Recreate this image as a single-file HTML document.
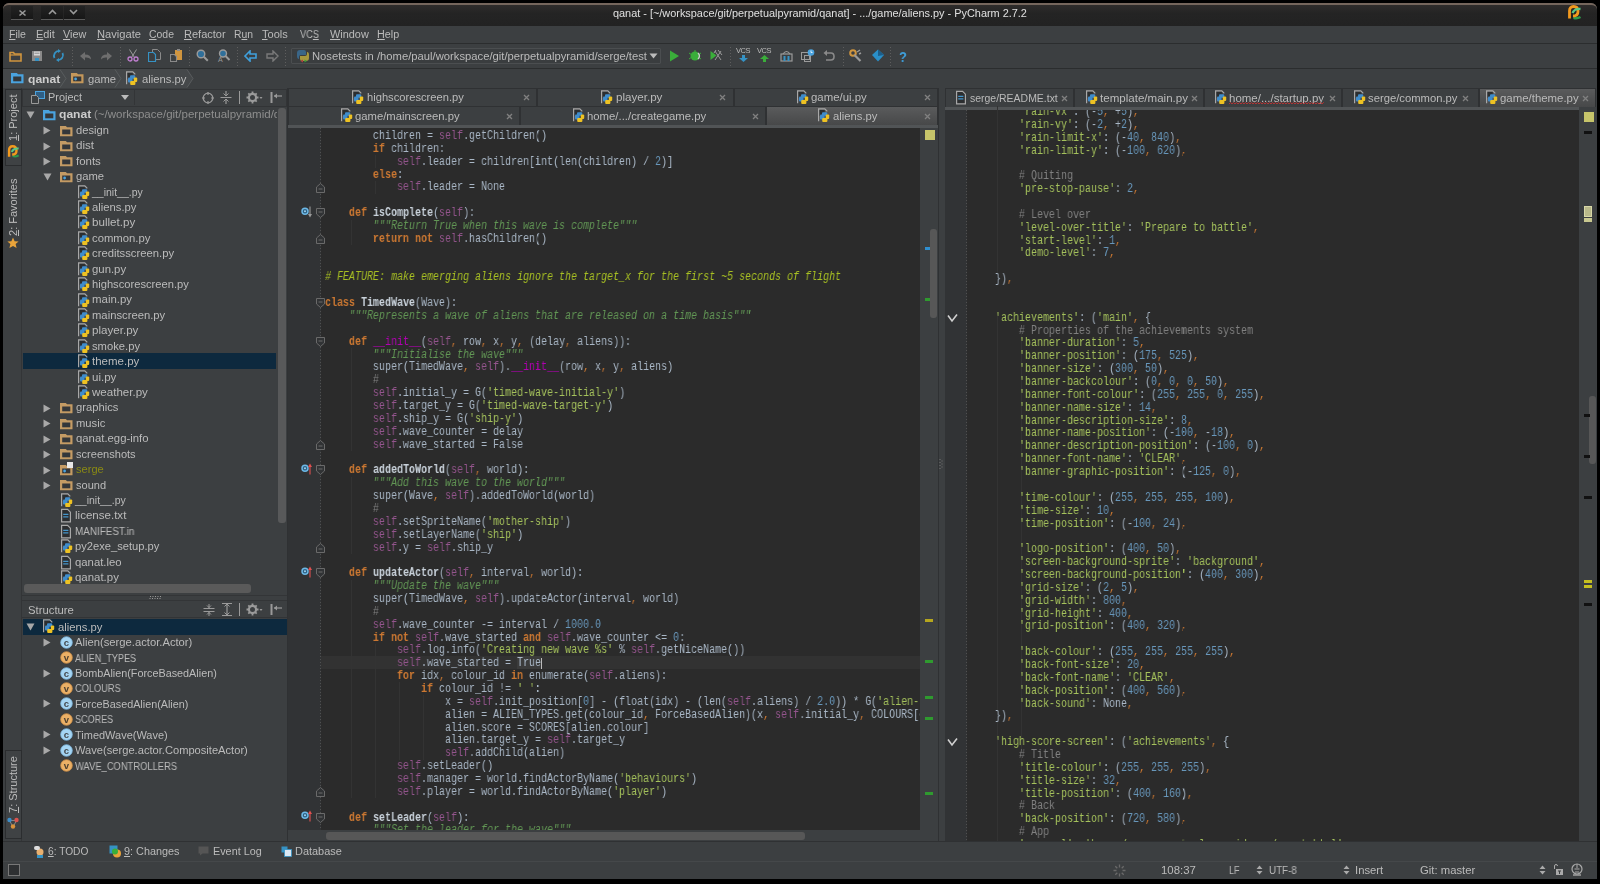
<!DOCTYPE html><html><head><meta charset="utf-8"><style>
*{margin:0;padding:0;box-sizing:border-box}
html,body{width:1600px;height:884px;overflow:hidden;background:#000}
body{position:relative;font-family:"Liberation Sans",sans-serif;font-size:10px;color:#bbbbbb}
.a{position:absolute}
.t{position:absolute;white-space:pre;line-height:14px;will-change:transform}
.win{position:absolute;left:3px;top:3px;width:1594px;height:876px;background:#3c3f41;border-radius:6px 6px 0 0;overflow:hidden}
.code{position:absolute;font-family:"Liberation Mono",monospace;font-size:12px;white-space:pre;line-height:12.857px;color:#a9b7c6;transform:scaleX(0.83333);transform-origin:0 0;will-change:transform}
.k{color:#cc7832;font-weight:bold}
.s{color:#94558d}
.st{color:#a5c25c}
.ds{color:#629755;font-style:italic}
.c{color:#808080}
.td{color:#a8c023;font-style:italic}
.n{color:#6897bb}
.cm{color:#cc7832}
.mg{color:#b200b2}
.fn{color:#c9d2db;font-weight:bold}
</style></head><body><div class="a" style="left:3px;top:3px;width:1594px;height:876px;background:#3c3f41;border-radius:6px 6px 0 0"></div>
<div class="a" style="left:3px;top:3px;width:1594px;height:22.5px;background:linear-gradient(#2e2c2b,#242424 40%,#222222);border-radius:6px 6px 0 0;border-top:2px solid #75665c"></div>
<div class="a" style="left:11px;top:6px;width:21.5px;height:14px;background:linear-gradient(#232323,#171717);border-bottom:1px solid #5a5a5a"></div>
<div class="a" style="left:41px;top:6px;width:21.5px;height:14px;background:linear-gradient(#232323,#171717);border-bottom:1px solid #5a5a5a"></div>
<div class="a" style="left:64px;top:6px;width:20.5px;height:14px;background:linear-gradient(#232323,#171717);border-bottom:1px solid #5a5a5a"></div>
<svg class="a" style="left:18px;top:9px" width="9" height="8" viewBox="0 0 9 8"><path d="M1.5 1.5l6 5M7.5 1.5l-6 5" stroke="#9a9a9a" stroke-width="1.6"/></svg>
<svg class="a" style="left:48px;top:9px" width="9" height="6" viewBox="0 0 9 6"><path d="M1 5l3.5-3.5l3.5 3.5" fill="none" stroke="#9a9a9a" stroke-width="1.6"/></svg>
<svg class="a" style="left:69px;top:9px" width="9" height="6" viewBox="0 0 9 6"><path d="M1 1l3.5 3.5l3.5-3.5" fill="none" stroke="#9a9a9a" stroke-width="1.6"/></svg>
<div class="t" style="left:613px;top:7.0px;color:#e0e0e0;transform:scaleX(1.0895);transform-origin:0 0">qanat - [~/workspace/git/perpetualpyramid/qanat] - .../game/aliens.py - PyCharm 2.7.2</div>
<svg class="a" style="left:1566px;top:5px" width="16" height="15" viewBox="0 0 16 15"><path d="M7.5 12.8q3.5 1.2 7-0.8" fill="none" stroke="#2f9a4c" stroke-width="2.4"/><path d="M3.5 13.5V6q0-4.5 4-4.5q4.5 0 4.5 5q0 4.5-5 4.5" fill="none" stroke="#f39a1e" stroke-width="2.8"/><path d="M6.5 8q2-4.5 8-4" fill="none" stroke="#5cc885" stroke-width="2.3"/></svg>
<div class="a" style="left:3px;top:25.5px;width:1594px;height:17.5px;background:#3c3f41"></div>
<div class="a" style="left:3px;top:43px;width:1594px;height:1px;background:#2b2d2e"></div>
<div class="t" style="left:9px;top:27.5px;color:#bbbbbb;transform:scaleX(1.0541);transform-origin:0 0"><u>F</u>ile</div>
<div class="t" style="left:36px;top:27.5px;color:#bbbbbb;transform:scaleX(1.0928);transform-origin:0 0"><u>E</u>dit</div>
<div class="t" style="left:63px;top:27.5px;color:#bbbbbb;transform:scaleX(1.0863);transform-origin:0 0"><u>V</u>iew</div>
<div class="t" style="left:97px;top:27.5px;color:#bbbbbb;transform:scaleX(1.1147);transform-origin:0 0"><u>N</u>avigate</div>
<div class="t" style="left:149px;top:27.5px;color:#bbbbbb;transform:scaleX(1.0445);transform-origin:0 0"><u>C</u>ode</div>
<div class="t" style="left:184px;top:27.5px;color:#bbbbbb;transform:scaleX(1.1001);transform-origin:0 0"><u>R</u>efactor</div>
<div class="t" style="left:234px;top:27.5px;color:#bbbbbb;transform:scaleX(1.0379);transform-origin:0 0">R<u>u</u>n</div>
<div class="t" style="left:262px;top:27.5px;color:#bbbbbb;transform:scaleX(1.1031);transform-origin:0 0"><u>T</u>ools</div>
<div class="t" style="left:300px;top:27.5px;color:#bbbbbb;transform:scaleX(0.9178);transform-origin:0 0">VC<u>S</u></div>
<div class="t" style="left:330px;top:27.5px;color:#bbbbbb;transform:scaleX(1.0888);transform-origin:0 0"><u>W</u>indow</div>
<div class="t" style="left:377px;top:27.5px;color:#bbbbbb;transform:scaleX(1.0775);transform-origin:0 0"><u>H</u>elp</div>
<div class="a" style="left:3px;top:44px;width:1594px;height:24px;background:#3c3f41"></div>
<div class="a" style="left:3px;top:68px;width:1594px;height:1px;background:#2b2d2e"></div>
<svg class="a" style="left:9px;top:50px" width="13" height="12" viewBox="0 0 13 12"><path d="M1 2.5h3.5l1 1.5h6.5v7h-11z" fill="none" stroke="#d0953e" stroke-width="1.6"/><path d="M1 5h11" stroke="#d0953e" stroke-width="1.2"/></svg>
<svg class="a" style="left:31px;top:50px" width="12" height="12" viewBox="0 0 12 12"><path d="M1 1h10v10h-10z" fill="#8a8a8a"/><rect x="3" y="1.5" width="6" height="4" fill="#d8d8d8"/><rect x="3.5" y="2.7" width="5" height="1" fill="#8a8a8a"/><rect x="4" y="8" width="4" height="3" fill="#3592c4"/></svg>
<svg class="a" style="left:52px;top:49px" width="13" height="13" viewBox="0 0 13 13"><path d="M2.5 9A5 5 0 0 1 7 1.8" fill="none" stroke="#3592c4" stroke-width="1.8"/><path d="M10.5 4A5 5 0 0 1 6 11.2" fill="none" stroke="#3592c4" stroke-width="1.8"/><path d="M6 0l3 2l-3 2z" fill="#3592c4"/><path d="M7 13l-3-2l3-2z" fill="#3592c4"/></svg>
<div class="a" style="left:72px;top:47px;width:1px;height:19px;background:repeating-linear-gradient(#5e5e5e 0 1px,transparent 1px 3px)"></div>
<div class="a" style="left:120px;top:47px;width:1px;height:19px;background:repeating-linear-gradient(#5e5e5e 0 1px,transparent 1px 3px)"></div>
<div class="a" style="left:189px;top:47px;width:1px;height:19px;background:repeating-linear-gradient(#5e5e5e 0 1px,transparent 1px 3px)"></div>
<div class="a" style="left:237px;top:47px;width:1px;height:19px;background:repeating-linear-gradient(#5e5e5e 0 1px,transparent 1px 3px)"></div>
<div class="a" style="left:285px;top:47px;width:1px;height:19px;background:repeating-linear-gradient(#5e5e5e 0 1px,transparent 1px 3px)"></div>
<div class="a" style="left:730px;top:47px;width:1px;height:19px;background:repeating-linear-gradient(#5e5e5e 0 1px,transparent 1px 3px)"></div>
<div class="a" style="left:843px;top:47px;width:1px;height:19px;background:repeating-linear-gradient(#5e5e5e 0 1px,transparent 1px 3px)"></div>
<div class="a" style="left:890px;top:47px;width:1px;height:19px;background:repeating-linear-gradient(#5e5e5e 0 1px,transparent 1px 3px)"></div>
<svg class="a" style="left:79px;top:51px" width="13" height="11" viewBox="0 0 13 11"><path d="M1 5l5-4v2.5q6 0 6 5q-2-2.5-6-2v3z" fill="#6e6e6e"/></svg>
<svg class="a" style="left:100px;top:51px" width="13" height="11" viewBox="0 0 13 11"><path d="M12 5l-5-4v2.5q-6 0-6 5q2-2.5 6-2v3z" fill="#6e6e6e"/></svg>
<svg class="a" style="left:127px;top:49px" width="12" height="13" viewBox="0 0 12 13"><path d="M2.5 0.5l5 8M9.5 0.5l-5 8" stroke="#9a9a9a" stroke-width="1"/><circle cx="3" cy="10" r="2" fill="none" stroke="#c07fd0" stroke-width="1.3"/><circle cx="9" cy="10" r="2" fill="none" stroke="#c07fd0" stroke-width="1.3"/></svg>
<svg class="a" style="left:148px;top:49px" width="13" height="13" viewBox="0 0 13 13"><path d="M4.5 0.5h5l3 3v7h-8z" fill="none" stroke="#8a8a8a"/><path d="M0.5 3.5h5l2 2v7h-7z" fill="#3c3f41" stroke="#3592c4" stroke-width="1.2"/></svg>
<svg class="a" style="left:170px;top:49px" width="13" height="13" viewBox="0 0 13 13"><rect x="5" y="1" width="7" height="10" fill="#d0953e"/><rect x="7" y="0" width="3" height="2" fill="#8a8a8a"/><path d="M0.5 5.5h4l2 2v5h-6z" fill="#3c3f41" stroke="#8a8a8a" stroke-width="1.1"/></svg>
<svg class="a" style="left:196px;top:49px" width="13" height="13" viewBox="0 0 13 13"><circle cx="5" cy="5" r="3.8" fill="#2f6f9a" stroke="#9a9a9a" stroke-width="1.4"/><path d="M7.8 7.8l4 4" stroke="#9a9a9a" stroke-width="2"/></svg>
<svg class="a" style="left:217px;top:49px" width="14" height="13" viewBox="0 0 14 13"><circle cx="6" cy="4.5" r="3.5" fill="#2f6f9a" stroke="#9a9a9a" stroke-width="1.4"/><path d="M8.5 7l4 4" stroke="#9a9a9a" stroke-width="2"/><text x="1" y="13" font-family="Liberation Sans" font-size="7" fill="#9a9a9a">A</text></svg>
<svg class="a" style="left:244px;top:50px" width="13" height="12" viewBox="0 0 13 12"><path d="M1 6l5-5v3h6v4h-6v3z" fill="none" stroke="#3fa0dc" stroke-width="1.6"/></svg>
<svg class="a" style="left:266px;top:50px" width="13" height="12" viewBox="0 0 13 12"><path d="M12 6l-5-5v3h-6v4h6v3z" fill="none" stroke="#7a7a7a" stroke-width="1.4"/></svg>
<div class="a" style="left:291px;top:48px;width:370px;height:16px;background:#3a3d3f;border:1px solid #4b4e50;border-radius:1px"></div>
<svg class="a" style="left:296px;top:49px" width="14" height="14" viewBox="0 0 14 14"><path d="M4 1h4q2 0 2 2v3h-5q-2 0-2 2v2q-2 0-2-3v-3q0-3 3-3z" fill="#3a6688"/><path d="M10 12h-4q-2 0-2-2v-3h5q2 0 2-2v-2q2 0 2 3v3q0 3-3 3z" fill="#a6983e"/><path d="M7 10.5l-2.5 1.5l2.5 1.5z" fill="#b04040"/><path d="M8.5 10.5l2.5 1.5l-2.5 1.5z" fill="#3a9a3a"/></svg>
<div class="t" style="left:312px;top:50.0px;color:#bbbbbb;transform:scaleX(1.1243);transform-origin:0 0">Nosetests in /home/paul/workspace/git/perpetualpyramid/serge/test</div>
<svg class="a" style="left:649px;top:53px" width="9" height="6" viewBox="0 0 9 6"><path d="M0.5 0.5h8l-4 5z" fill="#bbbbbb"/></svg>
<svg class="a" style="left:669px;top:50px" width="10" height="12" viewBox="0 0 10 12"><path d="M1 0.5l9 5.5l-9 5.5z" fill="#3aae3a"/></svg>
<svg class="a" style="left:689px;top:49px" width="13" height="13" viewBox="0 0 13 13"><circle cx="6" cy="7" r="4.5" fill="#3aae3a"/><path d="M0 4l3 2M0 10l3-2M12 4l-3 2M12 10l-3-2M6 1v3" stroke="#3aae3a" stroke-width="1"/><path d="M9 4q3 3 0 6" stroke="#cccccc" stroke-width="1.3" fill="none"/></svg>
<svg class="a" style="left:710px;top:49px" width="13" height="13" viewBox="0 0 13 13"><path d="M0.5 2l6 4.5l-6 4.5z" fill="#3aae3a"/><path d="M5 2l6 9M8 1l4 5M11 2l-6 9M6 1l-2 3" stroke="#9a9a9a" stroke-width="1" fill="none"/></svg>
<div class="t" style="left:736px;top:46px;font-size:7.5px;line-height:9px;color:#bbbbbb;letter-spacing:-0.5px">VCS</div>
<svg class="a" style="left:739px;top:55px" width="9" height="7" viewBox="0 0 9 7"><path d="M4.5 7l4.5-4h-3v-3h-3v3h-3z" fill="#3592c4"/></svg>
<div class="t" style="left:757px;top:46px;font-size:7.5px;line-height:9px;color:#bbbbbb;letter-spacing:-0.5px">VCS</div>
<svg class="a" style="left:760px;top:55px" width="9" height="7" viewBox="0 0 9 7"><path d="M4.5 0l4.5 4h-3v3h-3v-3h-3z" fill="#3aae3a"/></svg>
<svg class="a" style="left:780px;top:49px" width="13" height="13" viewBox="0 0 13 13"><rect x="1" y="5" width="11" height="7" fill="none" stroke="#9a9a9a" stroke-width="1.2"/><rect x="3.5" y="7" width="2" height="5" fill="#3592c4"/><rect x="7.5" y="7" width="2" height="5" fill="#3592c4"/><path d="M3 5q3.5-5 7 0" fill="none" stroke="#9a9a9a" stroke-width="1.2"/></svg>
<svg class="a" style="left:801px;top:49px" width="14" height="13" viewBox="0 0 14 13"><rect x="0.5" y="3.5" width="8" height="7" fill="none" stroke="#9a9a9a"/><rect x="3.5" y="6.5" width="6" height="6" fill="none" stroke="#9a9a9a"/><circle cx="10" cy="3.5" r="3.3" fill="#4aa3df"/><path d="M10 1.5v2h1.5" stroke="#fff" stroke-width="0.8" fill="none"/></svg>
<svg class="a" style="left:823px;top:50px" width="12" height="12" viewBox="0 0 12 12"><path d="M3 3h5q3 0 3 3.5t-3 3.5h-5" fill="none" stroke="#8a8a8a" stroke-width="1.6"/><path d="M0.5 3l3.5-3v6z" fill="#8a8a8a"/></svg>
<svg class="a" style="left:849px;top:49px" width="13" height="13" viewBox="0 0 13 13"><circle cx="4" cy="4" r="2.8" fill="none" stroke="#d0953e" stroke-width="2"/><path d="M5.5 6l6 6" stroke="#9a9a9a" stroke-width="2.2"/><path d="M8 3l3-2M10 5l2-1" stroke="#9a9a9a" stroke-width="1.4"/></svg>
<svg class="a" style="left:871px;top:49px" width="14" height="13" viewBox="0 0 14 13"><path d="M7 0.5l6 5.5l-6 6.5l-6-6.5z" fill="#2a8fc8"/><path d="M7 0.5l6 5.5l-6 1z" fill="#1c5e8a"/></svg>
<div class="t" style="left:899px;top:48.0px;font-size:15px;line-height:17px;color:#3fa0dc;font-weight:bold;transform:scaleX(0.8538);transform-origin:0 0">?</div>
<div class="a" style="left:3px;top:69px;width:1594px;height:19px;background:#3c3f41"></div>
<svg class="a" style="left:3px;top:69px" width="192" height="19" viewBox="0 0 192 19"><path d="M0 0H184L190 9.5L184 19H0z" fill="#45484a"/><path d="M57 0.5L63 9.5L57 18.5M112 0.5L118 9.5L112 18.5M184 0.5L190 9.5L184 18.5" fill="none" stroke="#595c5e" stroke-width="1"/></svg>
<svg class="a" style="left:11px;top:72px" width="13" height="12" viewBox="0 0 13 12"><path d="M0 1h5.8l1.3 1.2h5.4v9h-12.5z" fill="#4aa3df"/><rect x="2.2" y="4.5" width="8.1" height="4.8" fill="#34373a"/></svg>
<div class="t" style="left:28px;top:73.0px;color:#cccccc;font-weight:bold;transform:scaleX(1.2084);transform-origin:0 0">qanat</div>
<svg class="a" style="left:71px;top:72px" width="13" height="12" viewBox="0 0 13 12"><path d="M0 1h5.8l1.3 1.2h5.4v9h-12.5z" fill="#c3975b"/><rect x="2.2" y="4.5" width="8.1" height="4.8" fill="#34373a"/><circle cx="4.6" cy="7" r="1.4" fill="#4aa3df"/></svg>
<div class="t" style="left:88px;top:73.0px;color:#bbbbbb;transform:scaleX(1.1226);transform-origin:0 0">game</div>
<svg class="a" style="left:126px;top:71px" width="12" height="15" viewBox="0 0 12 15"><rect x="1.2" y="1.8" width="5.5" height="6" fill="#2c2e30"/><path d="M0.6 13.2V0.9H6.8L9.3 3.4" fill="none" stroke="#a8a8a8" stroke-width="1.2"/><rect x="4" y="4.3" width="5.2" height="3.4" rx="1" fill="#3f8ccb"/><rect x="2" y="6.5" width="4.5" height="5" rx="1" fill="#3f8ccb"/><rect x="7.8" y="6.5" width="3.4" height="4.5" rx="1" fill="#eec223"/><rect x="4.2" y="10" width="5.2" height="4" rx="1" fill="#eec223"/></svg>
<div class="t" style="left:142px;top:73.0px;color:#bbbbbb;transform:scaleX(1.1248);transform-origin:0 0">aliens.py</div>
<div class="a" style="left:3px;top:88px;width:19px;height:753px;background:#3c3f41;border-right:1px solid #333537"></div>
<div class="a" style="left:5px;top:88.5px;width:16.5px;height:77px;background:#3f4244;border:1px solid #2b2d2f"></div>
<div class="t" style="left:13px;top:141px;transform-origin:0 0;transform:rotate(-90deg) translate(0,-7px);color:#bbbbbb;font-size:11px"><u>1</u>: Project</div>
<svg class="a" style="left:6px;top:145px" width="14" height="13" viewBox="0 0 16 15"><path d="M7.5 12.8q3.5 1.2 7-0.8" fill="none" stroke="#2f9a4c" stroke-width="2.4"/><path d="M3.5 13.5V6q0-4.5 4-4.5q4.5 0 4.5 5q0 4.5-5 4.5" fill="none" stroke="#f39a1e" stroke-width="2.8"/><path d="M6.5 8q2-4.5 8-4" fill="none" stroke="#5cc885" stroke-width="2.3"/></svg>
<div class="t" style="left:13px;top:236px;transform-origin:0 0;transform:rotate(-90deg) translate(0,-7px);color:#bbbbbb;font-size:11px"><u>2</u>: Favorites</div>
<svg class="a" style="left:7px;top:237px" width="12" height="12" viewBox="0 0 12 12"><path d="M6 0.5l1.6 3.7l4 .3l-3 2.6l1 3.9l-3.6-2.1l-3.6 2.1l1-3.9l-3-2.6l4-.3z" fill="#e8a33a"/></svg>
<div class="a" style="left:5px;top:749.5px;width:16.5px;height:89px;background:#3f4244;border:1px solid #2b2d2f"></div>
<div class="t" style="left:13px;top:813px;transform-origin:0 0;transform:rotate(-90deg) translate(0,-7px);color:#bbbbbb;font-size:11px"><u>7</u>: Structure</div>
<svg class="a" style="left:7px;top:816.5px" width="12" height="12" viewBox="0 0 12 12"><path d="M2.5 3.5l3.5 6.5l3.5-6.5z" fill="none" stroke="#999" stroke-width="0.8"/><circle cx="2.5" cy="3" r="2.2" fill="#3d8ec9"/><circle cx="9.5" cy="3" r="2.2" fill="#d9534f"/><circle cx="6" cy="9.5" r="2.2" fill="#d9923a"/></svg>
<div class="a" style="left:22px;top:88px;width:265px;height:753px;background:#3c3f41"></div>
<div class="a" style="left:22px;top:89px;width:265px;height:18px;background:#3c3f41;border:1px solid #323436"></div>
<svg class="a" style="left:31px;top:91px" width="14" height="13" viewBox="0 0 14 13"><rect x="4.5" y="0.5" width="9" height="7" fill="#2f5f85" stroke="#4aa3df"/><path d="M0.5 4.5h5l2 2v6h-7z" fill="#3c3f41" stroke="#9a9a9a"/></svg>
<div class="t" style="left:48px;top:91.0px;color:#bbbbbb;transform:scaleX(1.0904);transform-origin:0 0">Project</div>
<svg class="a" style="left:121px;top:95px" width="8" height="5" viewBox="0 0 8 5"><path d="M0 0h8l-4 5z" fill="#bbbbbb"/></svg>
<div class="a" style="left:134px;top:90px;width:1px;height:15px;background:#333537"></div>
<svg class="a" style="left:202px;top:92px" width="12" height="12" viewBox="0 0 12 12"><circle cx="6" cy="6" r="4.8" fill="none" stroke="#9a9a9a" stroke-width="1.3"/><path d="M6 0v3M6 9v3M0 6h3M9 6h3" stroke="#9a9a9a" stroke-width="1.2"/></svg>
<svg class="a" style="left:220px;top:91px" width="12" height="13" viewBox="0 0 12 13"><path d="M6 0v4.5M6 8.5v4.5M0.5 6.5h11" stroke="#9a9a9a" stroke-width="1.2"/><path d="M3.5 2.5l2.5 2.5l2.5-2.5M3.5 10.5l2.5-2.5l2.5 2.5" fill="none" stroke="#9a9a9a"/></svg>
<div class="a" style="left:239px;top:91px;width:1px;height:13px;background:#9a9a9a"></div>
<svg class="a" style="left:246px;top:91px" width="17" height="13" viewBox="0 0 17 13"><circle cx="6.5" cy="6.5" r="3.6" fill="none" stroke="#9a9a9a" stroke-width="2.2"/><path d="M6.5 0.5v2.5M6.5 10v2.5M0.5 6.5h2.5M10 6.5h2.5M2.3 2.3l1.8 1.8M8.9 8.9l1.8 1.8M10.7 2.3l-1.8 1.8M4.1 8.9l-1.8 1.8" stroke="#9a9a9a" stroke-width="1.8"/><path d="M13.5 6h3l-1.5 2z" fill="#9a9a9a"/></svg>
<svg class="a" style="left:270px;top:91px" width="12" height="13" viewBox="0 0 12 13"><rect x="0.5" y="1" width="2" height="11" fill="#9a9a9a"/><path d="M4 5h8" stroke="#9a9a9a" stroke-width="1.2"/><path d="M4 5l3-2.5v5z" fill="#9a9a9a"/></svg>
<svg class="a" style="left:25.5px;top:111.2px" width="9" height="8" viewBox="0 0 9 8"><path d="M0.5 0.5h8l-4 7z" fill="#a8a8a8"/></svg>
<svg class="a" style="left:43px;top:109.2px" width="13" height="12" viewBox="0 0 13 12"><path d="M0 1h5.8l1.3 1.2h5.4v9h-12.5z" fill="#4aa3df"/><rect x="2.2" y="4.5" width="8.1" height="4.8" fill="#34373a"/></svg>
<div class="t" style="left:59px;top:108.45px;color:#cccccc;font-weight:bold;transform:scaleX(1.2084);transform-origin:0 0">qanat</div>
<div class="a" style="left:94px;top:106px;width:183px;height:17px;overflow:hidden">
<div class="t" style="left:0px;top:2.45px;color:#8e8e8e;transform:scaleX(1.1537);transform-origin:0 0">(~/workspace/git/perpetualpyramid/qanat)</div>
</div>
<svg class="a" style="left:42.8px;top:126.32px" width="8" height="9" viewBox="0 0 8 9"><path d="M0.5 0.5l7 4l-7 4z" fill="#a8a8a8"/></svg>
<svg class="a" style="left:60px;top:124.62px" width="13" height="12" viewBox="0 0 13 12"><path d="M0 1h5.8l1.3 1.2h5.4v9h-12.5z" fill="#c49b64"/><rect x="2.2" y="4.5" width="8.1" height="4.8" fill="#34373a"/></svg>
<div class="t" style="left:76px;top:123.87px;color:#bbbbbb;transform:scaleX(1.1147);transform-origin:0 0">design</div>
<svg class="a" style="left:42.8px;top:141.74px" width="8" height="9" viewBox="0 0 8 9"><path d="M0.5 0.5l7 4l-7 4z" fill="#a8a8a8"/></svg>
<svg class="a" style="left:60px;top:140.04px" width="13" height="12" viewBox="0 0 13 12"><path d="M0 1h5.8l1.3 1.2h5.4v9h-12.5z" fill="#c49b64"/><rect x="2.2" y="4.5" width="8.1" height="4.8" fill="#34373a"/></svg>
<div class="t" style="left:76px;top:139.29px;color:#bbbbbb;transform:scaleX(1.1620);transform-origin:0 0">dist</div>
<svg class="a" style="left:42.8px;top:157.16px" width="8" height="9" viewBox="0 0 8 9"><path d="M0.5 0.5l7 4l-7 4z" fill="#a8a8a8"/></svg>
<svg class="a" style="left:60px;top:155.46px" width="13" height="12" viewBox="0 0 13 12"><path d="M0 1h5.8l1.3 1.2h5.4v9h-12.5z" fill="#c49b64"/><rect x="2.2" y="4.5" width="8.1" height="4.8" fill="#34373a"/></svg>
<div class="t" style="left:76px;top:154.71px;color:#bbbbbb;transform:scaleX(1.1464);transform-origin:0 0">fonts</div>
<svg class="a" style="left:42.5px;top:172.88px" width="9" height="8" viewBox="0 0 9 8"><path d="M0.5 0.5h8l-4 7z" fill="#a8a8a8"/></svg>
<svg class="a" style="left:60px;top:170.88px" width="13" height="12" viewBox="0 0 13 12"><path d="M0 1h5.8l1.3 1.2h5.4v9h-12.5z" fill="#c49b64"/><rect x="2.2" y="4.5" width="8.1" height="4.8" fill="#34373a"/><circle cx="4.6" cy="7" r="1.4" fill="#4aa3df"/></svg>
<div class="t" style="left:76px;top:170.13px;color:#bbbbbb;transform:scaleX(1.1226);transform-origin:0 0">game</div>
<svg class="a" style="left:78px;top:184.6px" width="12" height="15" viewBox="0 0 12 15"><rect x="1.2" y="1.8" width="5.5" height="6" fill="#2c2e30"/><path d="M0.6 13.2V0.9H6.8L9.3 3.4" fill="none" stroke="#a8a8a8" stroke-width="1.2"/><rect x="4" y="4.3" width="5.2" height="3.4" rx="1" fill="#3f8ccb"/><rect x="2" y="6.5" width="4.5" height="5" rx="1" fill="#3f8ccb"/><rect x="7.8" y="6.5" width="3.4" height="4.5" rx="1" fill="#eec223"/><rect x="4.2" y="10" width="5.2" height="4" rx="1" fill="#eec223"/></svg>
<div class="t" style="left:92px;top:185.55px;color:#bbbbbb;transform:scaleX(1.0494);transform-origin:0 0">__init__.py</div>
<svg class="a" style="left:78px;top:200.02px" width="12" height="15" viewBox="0 0 12 15"><rect x="1.2" y="1.8" width="5.5" height="6" fill="#2c2e30"/><path d="M0.6 13.2V0.9H6.8L9.3 3.4" fill="none" stroke="#a8a8a8" stroke-width="1.2"/><rect x="4" y="4.3" width="5.2" height="3.4" rx="1" fill="#3f8ccb"/><rect x="2" y="6.5" width="4.5" height="5" rx="1" fill="#3f8ccb"/><rect x="7.8" y="6.5" width="3.4" height="4.5" rx="1" fill="#eec223"/><rect x="4.2" y="10" width="5.2" height="4" rx="1" fill="#eec223"/></svg>
<div class="t" style="left:92px;top:200.97px;color:#bbbbbb;transform:scaleX(1.1248);transform-origin:0 0">aliens.py</div>
<svg class="a" style="left:78px;top:215.44px" width="12" height="15" viewBox="0 0 12 15"><rect x="1.2" y="1.8" width="5.5" height="6" fill="#2c2e30"/><path d="M0.6 13.2V0.9H6.8L9.3 3.4" fill="none" stroke="#a8a8a8" stroke-width="1.2"/><rect x="4" y="4.3" width="5.2" height="3.4" rx="1" fill="#3f8ccb"/><rect x="2" y="6.5" width="4.5" height="5" rx="1" fill="#3f8ccb"/><rect x="7.8" y="6.5" width="3.4" height="4.5" rx="1" fill="#eec223"/><rect x="4.2" y="10" width="5.2" height="4" rx="1" fill="#eec223"/></svg>
<div class="t" style="left:92px;top:216.39px;color:#bbbbbb;transform:scaleX(1.1635);transform-origin:0 0">bullet.py</div>
<svg class="a" style="left:78px;top:230.86px" width="12" height="15" viewBox="0 0 12 15"><rect x="1.2" y="1.8" width="5.5" height="6" fill="#2c2e30"/><path d="M0.6 13.2V0.9H6.8L9.3 3.4" fill="none" stroke="#a8a8a8" stroke-width="1.2"/><rect x="4" y="4.3" width="5.2" height="3.4" rx="1" fill="#3f8ccb"/><rect x="2" y="6.5" width="4.5" height="5" rx="1" fill="#3f8ccb"/><rect x="7.8" y="6.5" width="3.4" height="4.5" rx="1" fill="#eec223"/><rect x="4.2" y="10" width="5.2" height="4" rx="1" fill="#eec223"/></svg>
<div class="t" style="left:92px;top:231.81px;color:#bbbbbb;transform:scaleX(1.1304);transform-origin:0 0">common.py</div>
<svg class="a" style="left:78px;top:246.28px" width="12" height="15" viewBox="0 0 12 15"><rect x="1.2" y="1.8" width="5.5" height="6" fill="#2c2e30"/><path d="M0.6 13.2V0.9H6.8L9.3 3.4" fill="none" stroke="#a8a8a8" stroke-width="1.2"/><rect x="4" y="4.3" width="5.2" height="3.4" rx="1" fill="#3f8ccb"/><rect x="2" y="6.5" width="4.5" height="5" rx="1" fill="#3f8ccb"/><rect x="7.8" y="6.5" width="3.4" height="4.5" rx="1" fill="#eec223"/><rect x="4.2" y="10" width="5.2" height="4" rx="1" fill="#eec223"/></svg>
<div class="t" style="left:92px;top:247.23px;color:#bbbbbb;transform:scaleX(1.1275);transform-origin:0 0">creditsscreen.py</div>
<svg class="a" style="left:78px;top:261.7px" width="12" height="15" viewBox="0 0 12 15"><rect x="1.2" y="1.8" width="5.5" height="6" fill="#2c2e30"/><path d="M0.6 13.2V0.9H6.8L9.3 3.4" fill="none" stroke="#a8a8a8" stroke-width="1.2"/><rect x="4" y="4.3" width="5.2" height="3.4" rx="1" fill="#3f8ccb"/><rect x="2" y="6.5" width="4.5" height="5" rx="1" fill="#3f8ccb"/><rect x="7.8" y="6.5" width="3.4" height="4.5" rx="1" fill="#eec223"/><rect x="4.2" y="10" width="5.2" height="4" rx="1" fill="#eec223"/></svg>
<div class="t" style="left:92px;top:262.65px;color:#bbbbbb;transform:scaleX(1.1365);transform-origin:0 0">gun.py</div>
<svg class="a" style="left:78px;top:277.12px" width="12" height="15" viewBox="0 0 12 15"><rect x="1.2" y="1.8" width="5.5" height="6" fill="#2c2e30"/><path d="M0.6 13.2V0.9H6.8L9.3 3.4" fill="none" stroke="#a8a8a8" stroke-width="1.2"/><rect x="4" y="4.3" width="5.2" height="3.4" rx="1" fill="#3f8ccb"/><rect x="2" y="6.5" width="4.5" height="5" rx="1" fill="#3f8ccb"/><rect x="7.8" y="6.5" width="3.4" height="4.5" rx="1" fill="#eec223"/><rect x="4.2" y="10" width="5.2" height="4" rx="1" fill="#eec223"/></svg>
<div class="t" style="left:92px;top:278.07px;color:#bbbbbb;transform:scaleX(1.1165);transform-origin:0 0">highscorescreen.py</div>
<svg class="a" style="left:78px;top:292.54px" width="12" height="15" viewBox="0 0 12 15"><rect x="1.2" y="1.8" width="5.5" height="6" fill="#2c2e30"/><path d="M0.6 13.2V0.9H6.8L9.3 3.4" fill="none" stroke="#a8a8a8" stroke-width="1.2"/><rect x="4" y="4.3" width="5.2" height="3.4" rx="1" fill="#3f8ccb"/><rect x="2" y="6.5" width="4.5" height="5" rx="1" fill="#3f8ccb"/><rect x="7.8" y="6.5" width="3.4" height="4.5" rx="1" fill="#eec223"/><rect x="4.2" y="10" width="5.2" height="4" rx="1" fill="#eec223"/></svg>
<div class="t" style="left:92px;top:293.49px;color:#bbbbbb;transform:scaleX(1.1434);transform-origin:0 0">main.py</div>
<svg class="a" style="left:78px;top:307.96px" width="12" height="15" viewBox="0 0 12 15"><rect x="1.2" y="1.8" width="5.5" height="6" fill="#2c2e30"/><path d="M0.6 13.2V0.9H6.8L9.3 3.4" fill="none" stroke="#a8a8a8" stroke-width="1.2"/><rect x="4" y="4.3" width="5.2" height="3.4" rx="1" fill="#3f8ccb"/><rect x="2" y="6.5" width="4.5" height="5" rx="1" fill="#3f8ccb"/><rect x="7.8" y="6.5" width="3.4" height="4.5" rx="1" fill="#eec223"/><rect x="4.2" y="10" width="5.2" height="4" rx="1" fill="#eec223"/></svg>
<div class="t" style="left:92px;top:308.91px;color:#bbbbbb;transform:scaleX(1.1249);transform-origin:0 0">mainscreen.py</div>
<svg class="a" style="left:78px;top:323.38px" width="12" height="15" viewBox="0 0 12 15"><rect x="1.2" y="1.8" width="5.5" height="6" fill="#2c2e30"/><path d="M0.6 13.2V0.9H6.8L9.3 3.4" fill="none" stroke="#a8a8a8" stroke-width="1.2"/><rect x="4" y="4.3" width="5.2" height="3.4" rx="1" fill="#3f8ccb"/><rect x="2" y="6.5" width="4.5" height="5" rx="1" fill="#3f8ccb"/><rect x="7.8" y="6.5" width="3.4" height="4.5" rx="1" fill="#eec223"/><rect x="4.2" y="10" width="5.2" height="4" rx="1" fill="#eec223"/></svg>
<div class="t" style="left:92px;top:324.33px;color:#bbbbbb;transform:scaleX(1.1598);transform-origin:0 0">player.py</div>
<svg class="a" style="left:78px;top:338.8px" width="12" height="15" viewBox="0 0 12 15"><rect x="1.2" y="1.8" width="5.5" height="6" fill="#2c2e30"/><path d="M0.6 13.2V0.9H6.8L9.3 3.4" fill="none" stroke="#a8a8a8" stroke-width="1.2"/><rect x="4" y="4.3" width="5.2" height="3.4" rx="1" fill="#3f8ccb"/><rect x="2" y="6.5" width="4.5" height="5" rx="1" fill="#3f8ccb"/><rect x="7.8" y="6.5" width="3.4" height="4.5" rx="1" fill="#eec223"/><rect x="4.2" y="10" width="5.2" height="4" rx="1" fill="#eec223"/></svg>
<div class="t" style="left:92px;top:339.75px;color:#bbbbbb;transform:scaleX(1.1215);transform-origin:0 0">smoke.py</div>
<div class="a" style="left:23px;top:353.21px;width:253px;height:16px;background:#0d293e"></div>
<svg class="a" style="left:78px;top:354.22px" width="12" height="15" viewBox="0 0 12 15"><rect x="1.2" y="1.8" width="5.5" height="6" fill="#2c2e30"/><path d="M0.6 13.2V0.9H6.8L9.3 3.4" fill="none" stroke="#a8a8a8" stroke-width="1.2"/><rect x="4" y="4.3" width="5.2" height="3.4" rx="1" fill="#3f8ccb"/><rect x="2" y="6.5" width="4.5" height="5" rx="1" fill="#3f8ccb"/><rect x="7.8" y="6.5" width="3.4" height="4.5" rx="1" fill="#eec223"/><rect x="4.2" y="10" width="5.2" height="4" rx="1" fill="#eec223"/></svg>
<div class="t" style="left:92px;top:355.17px;color:#bbbbbb;transform:scaleX(1.1492);transform-origin:0 0">theme.py</div>
<svg class="a" style="left:78px;top:369.64px" width="12" height="15" viewBox="0 0 12 15"><rect x="1.2" y="1.8" width="5.5" height="6" fill="#2c2e30"/><path d="M0.6 13.2V0.9H6.8L9.3 3.4" fill="none" stroke="#a8a8a8" stroke-width="1.2"/><rect x="4" y="4.3" width="5.2" height="3.4" rx="1" fill="#3f8ccb"/><rect x="2" y="6.5" width="4.5" height="5" rx="1" fill="#3f8ccb"/><rect x="7.8" y="6.5" width="3.4" height="4.5" rx="1" fill="#eec223"/><rect x="4.2" y="10" width="5.2" height="4" rx="1" fill="#eec223"/></svg>
<div class="t" style="left:92px;top:370.59px;color:#bbbbbb;transform:scaleX(1.1516);transform-origin:0 0">ui.py</div>
<svg class="a" style="left:78px;top:385.06px" width="12" height="15" viewBox="0 0 12 15"><rect x="1.2" y="1.8" width="5.5" height="6" fill="#2c2e30"/><path d="M0.6 13.2V0.9H6.8L9.3 3.4" fill="none" stroke="#a8a8a8" stroke-width="1.2"/><rect x="4" y="4.3" width="5.2" height="3.4" rx="1" fill="#3f8ccb"/><rect x="2" y="6.5" width="4.5" height="5" rx="1" fill="#3f8ccb"/><rect x="7.8" y="6.5" width="3.4" height="4.5" rx="1" fill="#eec223"/><rect x="4.2" y="10" width="5.2" height="4" rx="1" fill="#eec223"/></svg>
<div class="t" style="left:92px;top:386.01px;color:#bbbbbb;transform:scaleX(1.1548);transform-origin:0 0">weather.py</div>
<svg class="a" style="left:42.8px;top:403.88px" width="8" height="9" viewBox="0 0 8 9"><path d="M0.5 0.5l7 4l-7 4z" fill="#a8a8a8"/></svg>
<svg class="a" style="left:60px;top:402.18px" width="13" height="12" viewBox="0 0 13 12"><path d="M0 1h5.8l1.3 1.2h5.4v9h-12.5z" fill="#c49b64"/><rect x="2.2" y="4.5" width="8.1" height="4.8" fill="#34373a"/></svg>
<div class="t" style="left:76px;top:401.43px;color:#bbbbbb;transform:scaleX(1.1199);transform-origin:0 0">graphics</div>
<svg class="a" style="left:42.8px;top:419.3px" width="8" height="9" viewBox="0 0 8 9"><path d="M0.5 0.5l7 4l-7 4z" fill="#a8a8a8"/></svg>
<svg class="a" style="left:60px;top:417.6px" width="13" height="12" viewBox="0 0 13 12"><path d="M0 1h5.8l1.3 1.2h5.4v9h-12.5z" fill="#c49b64"/><rect x="2.2" y="4.5" width="8.1" height="4.8" fill="#34373a"/></svg>
<div class="t" style="left:76px;top:416.85px;color:#bbbbbb;transform:scaleX(1.1214);transform-origin:0 0">music</div>
<svg class="a" style="left:42.8px;top:434.72px" width="8" height="9" viewBox="0 0 8 9"><path d="M0.5 0.5l7 4l-7 4z" fill="#a8a8a8"/></svg>
<svg class="a" style="left:60px;top:433.02px" width="13" height="12" viewBox="0 0 13 12"><path d="M0 1h5.8l1.3 1.2h5.4v9h-12.5z" fill="#c49b64"/><rect x="2.2" y="4.5" width="8.1" height="4.8" fill="#34373a"/></svg>
<div class="t" style="left:76px;top:432.27px;color:#bbbbbb;transform:scaleX(1.1340);transform-origin:0 0">qanat.egg-info</div>
<svg class="a" style="left:42.8px;top:450.14px" width="8" height="9" viewBox="0 0 8 9"><path d="M0.5 0.5l7 4l-7 4z" fill="#a8a8a8"/></svg>
<svg class="a" style="left:60px;top:448.44px" width="13" height="12" viewBox="0 0 13 12"><path d="M0 1h5.8l1.3 1.2h5.4v9h-12.5z" fill="#c49b64"/><rect x="2.2" y="4.5" width="8.1" height="4.8" fill="#34373a"/></svg>
<div class="t" style="left:76px;top:447.69px;color:#bbbbbb;transform:scaleX(1.1063);transform-origin:0 0">screenshots</div>
<svg class="a" style="left:42.8px;top:465.56px" width="8" height="9" viewBox="0 0 8 9"><path d="M0.5 0.5l7 4l-7 4z" fill="#a8a8a8"/></svg>
<svg class="a" style="left:60px;top:463.86px" width="13" height="12" viewBox="0 0 13 12"><path d="M0 1h5.8l1.3 1.2h5.4v9h-12.5z" fill="#c49b64"/><rect x="2.2" y="4.5" width="8.1" height="4.8" fill="#34373a"/><circle cx="4.6" cy="7" r="1.4" fill="#4aa3df"/></svg>
<div class="a" style="left:67px;top:462.36px;width:6px;height:6px;background:#e8e8e8"></div>
<div class="t" style="left:76px;top:463.11px;color:#8a8a14;transform:scaleX(1.1069);transform-origin:0 0">serge</div>
<svg class="a" style="left:42.8px;top:480.98px" width="8" height="9" viewBox="0 0 8 9"><path d="M0.5 0.5l7 4l-7 4z" fill="#a8a8a8"/></svg>
<svg class="a" style="left:60px;top:479.28px" width="13" height="12" viewBox="0 0 13 12"><path d="M0 1h5.8l1.3 1.2h5.4v9h-12.5z" fill="#c49b64"/><rect x="2.2" y="4.5" width="8.1" height="4.8" fill="#34373a"/></svg>
<div class="t" style="left:76px;top:478.53px;color:#bbbbbb;transform:scaleX(1.1028);transform-origin:0 0">sound</div>
<svg class="a" style="left:61px;top:493.0px" width="12" height="15" viewBox="0 0 12 15"><rect x="1.2" y="1.8" width="5.5" height="6" fill="#2c2e30"/><path d="M0.6 13.2V0.9H6.8L9.3 3.4" fill="none" stroke="#a8a8a8" stroke-width="1.2"/><rect x="4" y="4.3" width="5.2" height="3.4" rx="1" fill="#3f8ccb"/><rect x="2" y="6.5" width="4.5" height="5" rx="1" fill="#3f8ccb"/><rect x="7.8" y="6.5" width="3.4" height="4.5" rx="1" fill="#eec223"/><rect x="4.2" y="10" width="5.2" height="4" rx="1" fill="#eec223"/></svg>
<div class="t" style="left:75px;top:493.95px;color:#bbbbbb;transform:scaleX(1.0494);transform-origin:0 0">__init__.py</div>
<svg class="a" style="left:61px;top:508.42px" width="11" height="15" viewBox="0 0 11 15"><path d="M0.6 1.4h6l2.8 2.8v9.6h-8.8z" fill="#2c2e30" stroke="#a8a8a8" stroke-width="1.2"/><path d="M2.2 6.3h5.2M2.2 8.8h5.2" stroke="#4596cc" stroke-width="1.3"/></svg>
<div class="t" style="left:75px;top:509.37px;color:#bbbbbb;transform:scaleX(1.1546);transform-origin:0 0">license.txt</div>
<svg class="a" style="left:61px;top:523.84px" width="11" height="15" viewBox="0 0 11 15"><path d="M0.6 1.4h6l2.8 2.8v9.6h-8.8z" fill="#2c2e30" stroke="#a8a8a8" stroke-width="1.2"/><path d="M2.2 6.3h5.2M2.2 8.8h5.2" stroke="#4596cc" stroke-width="1.3"/></svg>
<div class="t" style="left:75px;top:524.79px;color:#bbbbbb;transform:scaleX(0.9887);transform-origin:0 0">MANIFEST.in</div>
<svg class="a" style="left:61px;top:539.26px" width="12" height="15" viewBox="0 0 12 15"><rect x="1.2" y="1.8" width="5.5" height="6" fill="#2c2e30"/><path d="M0.6 13.2V0.9H6.8L9.3 3.4" fill="none" stroke="#a8a8a8" stroke-width="1.2"/><rect x="4" y="4.3" width="5.2" height="3.4" rx="1" fill="#3f8ccb"/><rect x="2" y="6.5" width="4.5" height="5" rx="1" fill="#3f8ccb"/><rect x="7.8" y="6.5" width="3.4" height="4.5" rx="1" fill="#eec223"/><rect x="4.2" y="10" width="5.2" height="4" rx="1" fill="#eec223"/></svg>
<div class="t" style="left:75px;top:540.21px;color:#bbbbbb;transform:scaleX(1.1164);transform-origin:0 0">py2exe_setup.py</div>
<svg class="a" style="left:61px;top:554.68px" width="11" height="15" viewBox="0 0 11 15"><path d="M0.6 1.4h6l2.8 2.8v9.6h-8.8z" fill="#2c2e30" stroke="#a8a8a8" stroke-width="1.2"/><path d="M2.2 6.3h5.2M2.2 8.8h5.2" stroke="#4596cc" stroke-width="1.3"/></svg>
<div class="t" style="left:75px;top:555.63px;color:#bbbbbb;transform:scaleX(1.1327);transform-origin:0 0">qanat.leo</div>
<svg class="a" style="left:61px;top:570.1px" width="12" height="15" viewBox="0 0 12 15"><rect x="1.2" y="1.8" width="5.5" height="6" fill="#2c2e30"/><path d="M0.6 13.2V0.9H6.8L9.3 3.4" fill="none" stroke="#a8a8a8" stroke-width="1.2"/><rect x="4" y="4.3" width="5.2" height="3.4" rx="1" fill="#3f8ccb"/><rect x="2" y="6.5" width="4.5" height="5" rx="1" fill="#3f8ccb"/><rect x="7.8" y="6.5" width="3.4" height="4.5" rx="1" fill="#eec223"/><rect x="4.2" y="10" width="5.2" height="4" rx="1" fill="#eec223"/></svg>
<div class="t" style="left:75px;top:571.05px;color:#bbbbbb;transform:scaleX(1.1430);transform-origin:0 0">qanat.py</div>
<div class="a" style="left:278px;top:108px;width:8px;height:415px;background:#58595a;border-radius:3px"></div>
<div class="a" style="left:24px;top:584px;width:227px;height:9px;background:#5a5a5a;border-radius:3px"></div>
<div class="a" style="left:22px;top:595px;width:265px;height:1px;background:#333537"></div>
<div class="a" style="left:22px;top:600px;width:265px;height:1px;background:#333537"></div>
<svg class="a" style="left:149px;top:595px" width="13" height="5" viewBox="0 0 13 5"><path d="M1 1.5h1M3.5 1.5h1M6 1.5h1M8.5 1.5h1M11 1.5h1M0.5 3.5h1M3 3.5h1M5.5 3.5h1M8 3.5h1M10.5 3.5h1" stroke="#9a9a9a" stroke-width="1"/></svg>
<div class="a" style="left:22px;top:601px;width:265px;height:17px;background:#3c3f41;border-bottom:1px solid #323436"></div>
<div class="t" style="left:28px;top:604.0px;color:#bbbbbb;transform:scaleX(1.1312);transform-origin:0 0">Structure</div>
<svg class="a" style="left:203px;top:604px" width="12" height="12" viewBox="0 0 12 12"><path d="M6 0v4M6 8v4M0.5 4.5h11M0.5 7.5h11" stroke="#9a9a9a" stroke-width="1"/><path d="M4 1.5l2 2l2-2M4 10.5l2-2l2 2" fill="none" stroke="#9a9a9a"/></svg>
<svg class="a" style="left:221px;top:603px" width="12" height="13" viewBox="0 0 12 13"><path d="M1 0.5h10M1 12.5h10M6 1v11" stroke="#9a9a9a" stroke-width="1.2"/><path d="M3.5 3.5l2.5-2.5l2.5 2.5M3.5 9.5l2.5 2.5l2.5-2.5" fill="none" stroke="#9a9a9a"/></svg>
<div class="a" style="left:239px;top:603px;width:1px;height:13px;background:#9a9a9a"></div>
<svg class="a" style="left:246px;top:603px" width="17" height="13" viewBox="0 0 17 13"><circle cx="6.5" cy="6.5" r="3.6" fill="none" stroke="#9a9a9a" stroke-width="2.2"/><path d="M6.5 0.5v2.5M6.5 10v2.5M0.5 6.5h2.5M10 6.5h2.5M2.3 2.3l1.8 1.8M8.9 8.9l1.8 1.8M10.7 2.3l-1.8 1.8M4.1 8.9l-1.8 1.8" stroke="#9a9a9a" stroke-width="1.8"/><path d="M13.5 6h3l-1.5 2z" fill="#9a9a9a"/></svg>
<svg class="a" style="left:270px;top:603px" width="12" height="13" viewBox="0 0 12 13"><rect x="0.5" y="1" width="2" height="11" fill="#9a9a9a"/><path d="M4 5h8" stroke="#9a9a9a" stroke-width="1.2"/><path d="M4 5l3-2.5v5z" fill="#9a9a9a"/></svg>
<div class="a" style="left:23px;top:619.1px;width:264px;height:15.5px;background:#0d293e"></div>
<svg class="a" style="left:25.5px;top:623.31px" width="9" height="8" viewBox="0 0 9 8"><path d="M0.5 0.5h8l-4 7z" fill="#a8a8a8"/></svg>
<svg class="a" style="left:43px;top:619.31px" width="12" height="15" viewBox="0 0 12 15"><rect x="1.2" y="1.8" width="5.5" height="6" fill="#2c2e30"/><path d="M0.6 13.2V0.9H6.8L9.3 3.4" fill="none" stroke="#a8a8a8" stroke-width="1.2"/><rect x="4" y="4.3" width="5.2" height="3.4" rx="1" fill="#3f8ccb"/><rect x="2" y="6.5" width="4.5" height="5" rx="1" fill="#3f8ccb"/><rect x="7.8" y="6.5" width="3.4" height="4.5" rx="1" fill="#eec223"/><rect x="4.2" y="10" width="5.2" height="4" rx="1" fill="#eec223"/></svg>
<div class="t" style="left:58px;top:620.81px;color:#bbbbbb;transform:scaleX(1.1248);transform-origin:0 0">aliens.py</div>
<svg class="a" style="left:43px;top:637.73px" width="8" height="9" viewBox="0 0 8 9"><path d="M0.5 0.5l7 4l-7 4z" fill="#a8a8a8"/></svg>
<svg class="a" style="left:59.5px;top:635.73px" width="13" height="13" viewBox="0 0 13 13"><circle cx="6.5" cy="6.5" r="5.8" fill="#a5d5f3" stroke="#7db8e0" stroke-width="0.8"/><text x="6.5" y="9.8" text-anchor="middle" font-family="Liberation Sans" font-weight="bold" font-size="9.5" fill="#454b50">c</text></svg>
<div class="t" style="left:75px;top:636.23px;color:#bbbbbb;transform:scaleX(1.1231);transform-origin:0 0">Alien(serge.actor.Actor)</div>
<svg class="a" style="left:59.5px;top:651.15px" width="13" height="13" viewBox="0 0 13 13"><circle cx="6.5" cy="6.5" r="5.8" fill="#ebb066" stroke="#d09048" stroke-width="0.8"/><text x="6.5" y="9.8" text-anchor="middle" font-family="Liberation Sans" font-weight="bold" font-size="9.5" fill="#4e4030">v</text></svg>
<div class="t" style="left:75px;top:651.65px;color:#bbbbbb;transform:scaleX(0.9090);transform-origin:0 0">ALIEN_TYPES</div>
<svg class="a" style="left:43px;top:668.57px" width="8" height="9" viewBox="0 0 8 9"><path d="M0.5 0.5l7 4l-7 4z" fill="#a8a8a8"/></svg>
<svg class="a" style="left:59.5px;top:666.57px" width="13" height="13" viewBox="0 0 13 13"><circle cx="6.5" cy="6.5" r="5.8" fill="#a5d5f3" stroke="#7db8e0" stroke-width="0.8"/><text x="6.5" y="9.8" text-anchor="middle" font-family="Liberation Sans" font-weight="bold" font-size="9.5" fill="#454b50">c</text></svg>
<div class="t" style="left:75px;top:667.07px;color:#bbbbbb;transform:scaleX(1.0806);transform-origin:0 0">BombAlien(ForceBasedAlien)</div>
<svg class="a" style="left:59.5px;top:681.99px" width="13" height="13" viewBox="0 0 13 13"><circle cx="6.5" cy="6.5" r="5.8" fill="#ebb066" stroke="#d09048" stroke-width="0.8"/><text x="6.5" y="9.8" text-anchor="middle" font-family="Liberation Sans" font-weight="bold" font-size="9.5" fill="#4e4030">v</text></svg>
<div class="t" style="left:75px;top:682.49px;color:#bbbbbb;transform:scaleX(0.9247);transform-origin:0 0">COLOURS</div>
<svg class="a" style="left:43px;top:699.41px" width="8" height="9" viewBox="0 0 8 9"><path d="M0.5 0.5l7 4l-7 4z" fill="#a8a8a8"/></svg>
<svg class="a" style="left:59.5px;top:697.41px" width="13" height="13" viewBox="0 0 13 13"><circle cx="6.5" cy="6.5" r="5.8" fill="#a5d5f3" stroke="#7db8e0" stroke-width="0.8"/><text x="6.5" y="9.8" text-anchor="middle" font-family="Liberation Sans" font-weight="bold" font-size="9.5" fill="#454b50">c</text></svg>
<div class="t" style="left:75px;top:697.91px;color:#bbbbbb;transform:scaleX(1.0789);transform-origin:0 0">ForceBasedAlien(Alien)</div>
<svg class="a" style="left:59.5px;top:712.83px" width="13" height="13" viewBox="0 0 13 13"><circle cx="6.5" cy="6.5" r="5.8" fill="#ebb066" stroke="#d09048" stroke-width="0.8"/><text x="6.5" y="9.8" text-anchor="middle" font-family="Liberation Sans" font-weight="bold" font-size="9.5" fill="#4e4030">v</text></svg>
<div class="t" style="left:75px;top:713.33px;color:#bbbbbb;transform:scaleX(0.9038);transform-origin:0 0">SCORES</div>
<svg class="a" style="left:43px;top:730.25px" width="8" height="9" viewBox="0 0 8 9"><path d="M0.5 0.5l7 4l-7 4z" fill="#a8a8a8"/></svg>
<svg class="a" style="left:59.5px;top:728.25px" width="13" height="13" viewBox="0 0 13 13"><circle cx="6.5" cy="6.5" r="5.8" fill="#a5d5f3" stroke="#7db8e0" stroke-width="0.8"/><text x="6.5" y="9.8" text-anchor="middle" font-family="Liberation Sans" font-weight="bold" font-size="9.5" fill="#454b50">c</text></svg>
<div class="t" style="left:75px;top:728.75px;color:#bbbbbb;transform:scaleX(1.0980);transform-origin:0 0">TimedWave(Wave)</div>
<svg class="a" style="left:43px;top:745.67px" width="8" height="9" viewBox="0 0 8 9"><path d="M0.5 0.5l7 4l-7 4z" fill="#a8a8a8"/></svg>
<svg class="a" style="left:59.5px;top:743.67px" width="13" height="13" viewBox="0 0 13 13"><circle cx="6.5" cy="6.5" r="5.8" fill="#a5d5f3" stroke="#7db8e0" stroke-width="0.8"/><text x="6.5" y="9.8" text-anchor="middle" font-family="Liberation Sans" font-weight="bold" font-size="9.5" fill="#454b50">c</text></svg>
<div class="t" style="left:75px;top:744.17px;color:#bbbbbb;transform:scaleX(1.1132);transform-origin:0 0">Wave(serge.actor.CompositeActor)</div>
<svg class="a" style="left:59.5px;top:759.09px" width="13" height="13" viewBox="0 0 13 13"><circle cx="6.5" cy="6.5" r="5.8" fill="#ebb066" stroke="#d09048" stroke-width="0.8"/><text x="6.5" y="9.8" text-anchor="middle" font-family="Liberation Sans" font-weight="bold" font-size="9.5" fill="#4e4030">v</text></svg>
<div class="t" style="left:75px;top:759.59px;color:#bbbbbb;transform:scaleX(0.9375);transform-origin:0 0">WAVE_CONTROLLERS</div>
<div class="a" style="left:287px;top:88px;width:653px;height:753px;background:#3c3f41"></div>
<div class="a" style="left:287px;top:88px;width:1px;height:753px;background:#2f3133"></div>
<div class="a" style="left:288px;top:88px;width:249px;height:18px;background:#3c3f41;border:1px solid #2f3133;border-bottom:none"></div>
<svg class="a" style="left:352px;top:89.5px" width="12" height="15" viewBox="0 0 12 15"><rect x="1.2" y="1.8" width="5.5" height="6" fill="#2c2e30"/><path d="M0.6 13.2V0.9H6.8L9.3 3.4" fill="none" stroke="#a8a8a8" stroke-width="1.2"/><rect x="4" y="4.3" width="5.2" height="3.4" rx="1" fill="#3f8ccb"/><rect x="2" y="6.5" width="4.5" height="5" rx="1" fill="#3f8ccb"/><rect x="7.8" y="6.5" width="3.4" height="4.5" rx="1" fill="#eec223"/><rect x="4.2" y="10" width="5.2" height="4" rx="1" fill="#eec223"/></svg>
<div class="t" style="left:367px;top:91.0px;color:#bbbbbb;transform:scaleX(1.1165);transform-origin:0 0">highscorescreen.py</div>
<svg class="a" style="left:523px;top:94.0px" width="7" height="7" viewBox="0 0 7 7"><path d="M1 1l5 5M6 1l-5 5" stroke="#808080" stroke-width="1.3"/></svg>
<div class="a" style="left:537px;top:88px;width:197px;height:18px;background:#3c3f41;border:1px solid #2f3133;border-bottom:none"></div>
<svg class="a" style="left:601px;top:89.5px" width="12" height="15" viewBox="0 0 12 15"><rect x="1.2" y="1.8" width="5.5" height="6" fill="#2c2e30"/><path d="M0.6 13.2V0.9H6.8L9.3 3.4" fill="none" stroke="#a8a8a8" stroke-width="1.2"/><rect x="4" y="4.3" width="5.2" height="3.4" rx="1" fill="#3f8ccb"/><rect x="2" y="6.5" width="4.5" height="5" rx="1" fill="#3f8ccb"/><rect x="7.8" y="6.5" width="3.4" height="4.5" rx="1" fill="#eec223"/><rect x="4.2" y="10" width="5.2" height="4" rx="1" fill="#eec223"/></svg>
<div class="t" style="left:616px;top:91.0px;color:#bbbbbb;transform:scaleX(1.1598);transform-origin:0 0">player.py</div>
<svg class="a" style="left:719px;top:94.0px" width="7" height="7" viewBox="0 0 7 7"><path d="M1 1l5 5M6 1l-5 5" stroke="#808080" stroke-width="1.3"/></svg>
<div class="a" style="left:734px;top:88px;width:204px;height:18px;background:#3c3f41;border:1px solid #2f3133;border-bottom:none"></div>
<svg class="a" style="left:797px;top:89.5px" width="12" height="15" viewBox="0 0 12 15"><rect x="1.2" y="1.8" width="5.5" height="6" fill="#2c2e30"/><path d="M0.6 13.2V0.9H6.8L9.3 3.4" fill="none" stroke="#a8a8a8" stroke-width="1.2"/><rect x="4" y="4.3" width="5.2" height="3.4" rx="1" fill="#3f8ccb"/><rect x="2" y="6.5" width="4.5" height="5" rx="1" fill="#3f8ccb"/><rect x="7.8" y="6.5" width="3.4" height="4.5" rx="1" fill="#eec223"/><rect x="4.2" y="10" width="5.2" height="4" rx="1" fill="#eec223"/></svg>
<div class="t" style="left:811px;top:91.0px;color:#bbbbbb;transform:scaleX(1.1394);transform-origin:0 0">game/ui.py</div>
<svg class="a" style="left:924px;top:94.0px" width="7" height="7" viewBox="0 0 7 7"><path d="M1 1l5 5M6 1l-5 5" stroke="#808080" stroke-width="1.3"/></svg>
<div class="a" style="left:288px;top:106px;width:232px;height:19px;background:#3c3f41;border:1px solid #2f3133;border-bottom:none"></div>
<svg class="a" style="left:341px;top:108.0px" width="12" height="15" viewBox="0 0 12 15"><rect x="1.2" y="1.8" width="5.5" height="6" fill="#2c2e30"/><path d="M0.6 13.2V0.9H6.8L9.3 3.4" fill="none" stroke="#a8a8a8" stroke-width="1.2"/><rect x="4" y="4.3" width="5.2" height="3.4" rx="1" fill="#3f8ccb"/><rect x="2" y="6.5" width="4.5" height="5" rx="1" fill="#3f8ccb"/><rect x="7.8" y="6.5" width="3.4" height="4.5" rx="1" fill="#eec223"/><rect x="4.2" y="10" width="5.2" height="4" rx="1" fill="#eec223"/></svg>
<div class="t" style="left:355px;top:109.5px;color:#bbbbbb;transform:scaleX(1.1265);transform-origin:0 0">game/mainscreen.py</div>
<svg class="a" style="left:506px;top:112.5px" width="7" height="7" viewBox="0 0 7 7"><path d="M1 1l5 5M6 1l-5 5" stroke="#808080" stroke-width="1.3"/></svg>
<div class="a" style="left:520px;top:106px;width:246px;height:19px;background:#3c3f41;border:1px solid #2f3133;border-bottom:none"></div>
<svg class="a" style="left:573px;top:108.0px" width="12" height="15" viewBox="0 0 12 15"><rect x="1.2" y="1.8" width="5.5" height="6" fill="#2c2e30"/><path d="M0.6 13.2V0.9H6.8L9.3 3.4" fill="none" stroke="#a8a8a8" stroke-width="1.2"/><rect x="4" y="4.3" width="5.2" height="3.4" rx="1" fill="#3f8ccb"/><rect x="2" y="6.5" width="4.5" height="5" rx="1" fill="#3f8ccb"/><rect x="7.8" y="6.5" width="3.4" height="4.5" rx="1" fill="#eec223"/><rect x="4.2" y="10" width="5.2" height="4" rx="1" fill="#eec223"/></svg>
<div class="t" style="left:587px;top:109.5px;color:#bbbbbb;transform:scaleX(1.1343);transform-origin:0 0">home/.../creategame.py</div>
<svg class="a" style="left:752px;top:112.5px" width="7" height="7" viewBox="0 0 7 7"><path d="M1 1l5 5M6 1l-5 5" stroke="#808080" stroke-width="1.3"/></svg>
<div class="a" style="left:766px;top:106px;width:172px;height:19px;background:linear-gradient(#5a5b5c,#474849);border:1px solid #2f3133;border-bottom:none"></div>
<svg class="a" style="left:818px;top:108.0px" width="12" height="15" viewBox="0 0 12 15"><rect x="1.2" y="1.8" width="5.5" height="6" fill="#2c2e30"/><path d="M0.6 13.2V0.9H6.8L9.3 3.4" fill="none" stroke="#a8a8a8" stroke-width="1.2"/><rect x="4" y="4.3" width="5.2" height="3.4" rx="1" fill="#3f8ccb"/><rect x="2" y="6.5" width="4.5" height="5" rx="1" fill="#3f8ccb"/><rect x="7.8" y="6.5" width="3.4" height="4.5" rx="1" fill="#eec223"/><rect x="4.2" y="10" width="5.2" height="4" rx="1" fill="#eec223"/></svg>
<div class="t" style="left:833px;top:109.5px;color:#bbbbbb;transform:scaleX(1.1248);transform-origin:0 0">aliens.py</div>
<svg class="a" style="left:924px;top:112.5px" width="7" height="7" viewBox="0 0 7 7"><path d="M1 1l5 5M6 1l-5 5" stroke="#808080" stroke-width="1.3"/></svg>
<div class="a" style="left:288px;top:125px;width:650px;height:3px;background:#515456"></div>
<div class="a" style="left:288px;top:128px;width:33px;height:702px;background:#313335"></div>
<div class="a" style="left:320px;top:128px;width:1px;height:702px;background:repeating-linear-gradient(#505050 0 1px,transparent 1px 3px)"></div>
<div class="a" style="left:321px;top:128px;width:599px;height:702px;background:#2b2b2b"></div>
<div class="a" style="left:321px;top:655.94px;width:599px;height:12.86px;background:#323232"></div>
<div class="a" style="left:920px;top:128px;width:18px;height:713px;background:#3c3f41"></div>
<div class="a" style="left:925px;top:130px;width:10px;height:10px;background:#c6c46a"></div>
<div class="a" style="left:930px;top:229px;width:7px;height:89px;background:#575757;border-radius:3px"></div>
<div class="a" style="left:925px;top:246.5px;width:5px;height:3px;background:#2f8fd0"></div>
<div class="a" style="left:925px;top:297.5px;width:5px;height:3px;background:#2f9a2f"></div>
<div class="a" style="left:925px;top:618.5px;width:8px;height:3px;background:#b5a61e"></div>
<div class="a" style="left:925px;top:659.5px;width:8px;height:3px;background:#2f9a2f"></div>
<div class="a" style="left:925px;top:696px;width:8px;height:3px;background:#2f9a2f"></div>
<div class="a" style="left:925px;top:716.5px;width:8px;height:3px;background:#2f9a2f"></div>
<div class="a" style="left:925px;top:792px;width:8px;height:3px;background:#2f9a2f"></div>
<div class="a" style="left:288px;top:830px;width:632px;height:11px;background:#3c3f41"></div>
<div class="a" style="left:326px;top:832px;width:479px;height:8px;background:#575757;border-radius:3px"></div>
<div class="a" style="left:350.5px;top:219.6px;width:1px;height:25.71px;background:#333333"></div>
<div class="a" style="left:374.5px;top:155.31px;width:1px;height:12.86px;background:#333333"></div>
<div class="a" style="left:374.5px;top:181.03px;width:1px;height:12.86px;background:#333333"></div>
<div class="a" style="left:350.5px;top:348.17px;width:1px;height:102.86px;background:#333333"></div>
<div class="a" style="left:350.5px;top:476.74px;width:1px;height:77.14px;background:#333333"></div>
<div class="a" style="left:350.5px;top:579.6px;width:1px;height:218.57px;background:#333333"></div>
<div class="a" style="left:374.5px;top:643.88px;width:1px;height:154.28px;background:#333333"></div>
<div class="a" style="left:398.5px;top:682.45px;width:1px;height:77.14px;background:#333333"></div>
<div class="a" style="left:422.5px;top:695.31px;width:1px;height:64.28px;background:#333333"></div>
<div class="a" style="left:517px;top:656.24px;width:24px;height:12.6px;background:#3b3b3b"></div>
<div class="a" style="left:321px;top:128px;width:599px;height:702px;overflow:hidden">
<div class="code" style="left:4px;top:1.6px">        children = <span class="s">self</span>.getChildren()
        <span class="k">if</span> children:
            <span class="s">self</span>.leader = children[int(len(children) / <span class="n">2</span>)]
        <span class="k">else</span>:
            <span class="s">self</span>.leader = None

    <span class="k">def</span> <span class="fn">isComplete</span>(<span class="s">self</span>):
        <span class="ds">&quot;&quot;&quot;Return True when this wave is complete&quot;&quot;&quot;</span>
        <span class="k">return</span> <span class="k">not</span> <span class="s">self</span>.hasChildren()


<span class="td"># FEATURE: make emerging aliens ignore the target_x for the first ~5 seconds of flight</span>

<span class="k">class</span> <span class="fn">TimedWave</span>(Wave):
    <span class="ds">&quot;&quot;&quot;Represents a wave of aliens that are released on a time basis&quot;&quot;&quot;</span>

    <span class="k">def</span> <span class="mg">__init__</span>(<span class="s">self</span><span class="cm">,</span> row<span class="cm">,</span> x<span class="cm">,</span> y<span class="cm">,</span> (delay<span class="cm">,</span> aliens)):
        <span class="ds">&quot;&quot;&quot;Initialise the wave&quot;&quot;&quot;</span>
        super(TimedWave<span class="cm">,</span> <span class="s">self</span>).<span class="mg">__init__</span>(row<span class="cm">,</span> x<span class="cm">,</span> y<span class="cm">,</span> aliens)
        <span class="c">#</span>
        <span class="s">self</span>.initial_y = G(<span class="st">&#x27;timed-wave-initial-y&#x27;</span>)
        <span class="s">self</span>.target_y = G(<span class="st">&#x27;timed-wave-target-y&#x27;</span>)
        <span class="s">self</span>.ship_y = G(<span class="st">&#x27;ship-y&#x27;</span>)
        <span class="s">self</span>.wave_counter = delay
        <span class="s">self</span>.wave_started = False

    <span class="k">def</span> <span class="fn">addedToWorld</span>(<span class="s">self</span><span class="cm">,</span> world):
        <span class="ds">&quot;&quot;&quot;Add this wave to the world&quot;&quot;&quot;</span>
        super(Wave<span class="cm">,</span> <span class="s">self</span>).addedToWorld(world)
        <span class="c">#</span>
        <span class="s">self</span>.setSpriteName(<span class="st">&#x27;mother-ship&#x27;</span>)
        <span class="s">self</span>.setLayerName(<span class="st">&#x27;ship&#x27;</span>)
        <span class="s">self</span>.y = <span class="s">self</span>.ship_y

    <span class="k">def</span> <span class="fn">updateActor</span>(<span class="s">self</span><span class="cm">,</span> interval<span class="cm">,</span> world):
        <span class="ds">&quot;&quot;&quot;Update the wave&quot;&quot;&quot;</span>
        super(TimedWave<span class="cm">,</span> <span class="s">self</span>).updateActor(interval<span class="cm">,</span> world)
        <span class="c">#</span>
        <span class="s">self</span>.wave_counter -= interval / <span class="n">1000.0</span>
        <span class="k">if</span> <span class="k">not</span> <span class="s">self</span>.wave_started <span class="k">and</span> <span class="s">self</span>.wave_counter &lt;= <span class="n">0</span>:
            <span class="s">self</span>.log.info(<span class="st">&#x27;Creating new wave %s&#x27;</span> % <span class="s">self</span>.getNiceName())
            <span class="s">self</span>.wave_started = True
            <span class="k">for</span> idx<span class="cm">,</span> colour_id <span class="k">in</span> enumerate(<span class="s">self</span>.aliens):
                <span class="k">if</span> colour_id != <span class="st">&#x27; &#x27;</span>:
                    x = <span class="s">self</span>.init_position[<span class="n">0</span>] - (float(idx) - (len(<span class="s">self</span>.aliens) / <span class="n">2.0</span>)) * G(<span class="st">&#x27;alien-spacing&#x27;</span>)
                    alien = ALIEN_TYPES.get(colour_id<span class="cm">,</span> ForceBasedAlien)(x<span class="cm">,</span> <span class="s">self</span>.initial_y<span class="cm">,</span> COLOURS[colour_id])
                    alien.score = SCORES[alien.colour]
                    alien.target_y = <span class="s">self</span>.target_y
                    <span class="s">self</span>.addChild(alien)
            <span class="s">self</span>.setLeader()
            <span class="s">self</span>.manager = world.findActorByName(<span class="st">&#x27;behaviours&#x27;</span>)
            <span class="s">self</span>.player = world.findActorByName(<span class="st">&#x27;player&#x27;</span>)

    <span class="k">def</span> <span class="fn">setLeader</span>(<span class="s">self</span>):
        <span class="ds">&quot;&quot;&quot;Set the leader for the wave&quot;&quot;&quot;</span>
        children = <span class="s">self</span>.getChildren()</div>
</div>
<div class="a" style="left:541px;top:657.74px;width:1px;height:11px;background:#bbbbbb"></div>
<svg class="a" style="left:316px;top:182.53px" width="9" height="10" viewBox="0 0 9 10"><path d="M0.5 9.5h8v-5.5l-4-3.5l-4 3.5z" fill="#313335" stroke="#6a6a6a"/><path d="M2.5 6h4" stroke="#6a6a6a"/></svg>
<svg class="a" style="left:316px;top:233.96px" width="9" height="10" viewBox="0 0 9 10"><path d="M0.5 9.5h8v-5.5l-4-3.5l-4 3.5z" fill="#313335" stroke="#6a6a6a"/><path d="M2.5 6h4" stroke="#6a6a6a"/></svg>
<svg class="a" style="left:316px;top:439.67px" width="9" height="10" viewBox="0 0 9 10"><path d="M0.5 9.5h8v-5.5l-4-3.5l-4 3.5z" fill="#313335" stroke="#6a6a6a"/><path d="M2.5 6h4" stroke="#6a6a6a"/></svg>
<svg class="a" style="left:316px;top:542.52px" width="9" height="10" viewBox="0 0 9 10"><path d="M0.5 9.5h8v-5.5l-4-3.5l-4 3.5z" fill="#313335" stroke="#6a6a6a"/><path d="M2.5 6h4" stroke="#6a6a6a"/></svg>
<svg class="a" style="left:316px;top:786.81px" width="9" height="10" viewBox="0 0 9 10"><path d="M0.5 9.5h8v-5.5l-4-3.5l-4 3.5z" fill="#313335" stroke="#6a6a6a"/><path d="M2.5 6h4" stroke="#6a6a6a"/></svg>
<svg class="a" style="left:316px;top:208.24px" width="9" height="10" viewBox="0 0 9 10"><path d="M0.5 0.5h8v5.5l-4 3.5l-4-3.5z" fill="#313335" stroke="#6a6a6a"/><path d="M2.5 4h4" stroke="#6a6a6a"/></svg>
<svg class="a" style="left:316px;top:298.24px" width="9" height="10" viewBox="0 0 9 10"><path d="M0.5 0.5h8v5.5l-4 3.5l-4-3.5z" fill="#313335" stroke="#6a6a6a"/><path d="M2.5 4h4" stroke="#6a6a6a"/></svg>
<svg class="a" style="left:316px;top:336.81px" width="9" height="10" viewBox="0 0 9 10"><path d="M0.5 0.5h8v5.5l-4 3.5l-4-3.5z" fill="#313335" stroke="#6a6a6a"/><path d="M2.5 4h4" stroke="#6a6a6a"/></svg>
<svg class="a" style="left:316px;top:465.38px" width="9" height="10" viewBox="0 0 9 10"><path d="M0.5 0.5h8v5.5l-4 3.5l-4-3.5z" fill="#313335" stroke="#6a6a6a"/><path d="M2.5 4h4" stroke="#6a6a6a"/></svg>
<svg class="a" style="left:316px;top:568.24px" width="9" height="10" viewBox="0 0 9 10"><path d="M0.5 0.5h8v5.5l-4 3.5l-4-3.5z" fill="#313335" stroke="#6a6a6a"/><path d="M2.5 4h4" stroke="#6a6a6a"/></svg>
<svg class="a" style="left:316px;top:812.52px" width="9" height="10" viewBox="0 0 9 10"><path d="M0.5 0.5h8v5.5l-4 3.5l-4-3.5z" fill="#313335" stroke="#6a6a6a"/><path d="M2.5 4h4" stroke="#6a6a6a"/></svg>
<svg class="a" style="left:301px;top:205.54px" width="13" height="12" viewBox="0 0 13 12"><circle cx="4" cy="5.2" r="3" fill="#2f5f80" stroke="#6cb8e6" stroke-width="1.5"/><circle cx="4" cy="5.2" r="1" fill="#9fd3f3"/><path d="M9 0.5v8.5" stroke="#9a9a9a" stroke-width="1.1"/><path d="M7 8l2 3.5l2-3.5z" fill="#9a9a9a"/></svg>
<svg class="a" style="left:301px;top:462.68px" width="13" height="12" viewBox="0 0 13 12"><circle cx="4" cy="5.2" r="3" fill="#2f5f80" stroke="#6cb8e6" stroke-width="1.5"/><circle cx="4" cy="5.2" r="1" fill="#9fd3f3"/><path d="M9 3v8.5" stroke="#e05050" stroke-width="1.1"/><path d="M7 4l2-3.5l2 3.5z" fill="#e05050"/></svg>
<svg class="a" style="left:301px;top:565.54px" width="13" height="12" viewBox="0 0 13 12"><circle cx="4" cy="5.2" r="3" fill="#2f5f80" stroke="#6cb8e6" stroke-width="1.5"/><circle cx="4" cy="5.2" r="1" fill="#9fd3f3"/><path d="M9 3v8.5" stroke="#e05050" stroke-width="1.1"/><path d="M7 4l2-3.5l2 3.5z" fill="#e05050"/></svg>
<svg class="a" style="left:301px;top:809.82px" width="13" height="12" viewBox="0 0 13 12"><circle cx="4" cy="5.2" r="3" fill="#2f5f80" stroke="#6cb8e6" stroke-width="1.5"/><circle cx="4" cy="5.2" r="1" fill="#9fd3f3"/><path d="M9 3v8.5" stroke="#e05050" stroke-width="1.1"/><path d="M7 4l2-3.5l2 3.5z" fill="#e05050"/></svg>
<div class="a" style="left:938px;top:88px;width:7px;height:753px;background:#3c3f41"></div>
<div class="a" style="left:938px;top:88px;width:1px;height:753px;background:#2f3133"></div>
<svg class="a" style="left:939px;top:458px" width="4" height="14" viewBox="0 0 4 14"><path d="M1 1v1M1 4v1M1 7v1M1 10v1M3 2.5v1M3 5.5v1M3 8.5v1" stroke="#777" stroke-width="1"/></svg>
<div class="a" style="left:944px;top:88px;width:653px;height:753px;background:#3c3f41"></div>
<div class="a" style="left:945px;top:88px;width:129px;height:19px;background:#3c3f41;border:1px solid #2f3133;border-bottom:none"></div>
<svg class="a" style="left:956px;top:90.0px" width="11" height="15" viewBox="0 0 11 15"><path d="M0.6 1.4h6l2.8 2.8v9.6h-8.8z" fill="#2c2e30" stroke="#a8a8a8" stroke-width="1.2"/><path d="M2.2 6.3h5.2M2.2 8.8h5.2" stroke="#4596cc" stroke-width="1.3"/></svg>
<div class="t" style="left:970px;top:91.5px;color:#bbbbbb;transform:scaleX(1.0459);transform-origin:0 0">serge/README.txt</div>
<svg class="a" style="left:1061px;top:94.5px" width="7" height="7" viewBox="0 0 7 7"><path d="M1 1l5 5M6 1l-5 5" stroke="#808080" stroke-width="1.3"/></svg>
<div class="a" style="left:1074px;top:88px;width:130px;height:19px;background:#3c3f41;border:1px solid #2f3133;border-bottom:none"></div>
<svg class="a" style="left:1086px;top:90.0px" width="12" height="15" viewBox="0 0 12 15"><rect x="1.2" y="1.8" width="5.5" height="6" fill="#2c2e30"/><path d="M0.6 13.2V0.9H6.8L9.3 3.4" fill="none" stroke="#a8a8a8" stroke-width="1.2"/><rect x="4" y="4.3" width="5.2" height="3.4" rx="1" fill="#3f8ccb"/><rect x="2" y="6.5" width="4.5" height="5" rx="1" fill="#3f8ccb"/><rect x="7.8" y="6.5" width="3.4" height="4.5" rx="1" fill="#eec223"/><rect x="4.2" y="10" width="5.2" height="4" rx="1" fill="#eec223"/></svg>
<div class="t" style="left:1100px;top:91.5px;color:#bbbbbb;transform:scaleX(1.1563);transform-origin:0 0">template/main.py</div>
<svg class="a" style="left:1191px;top:94.5px" width="7" height="7" viewBox="0 0 7 7"><path d="M1 1l5 5M6 1l-5 5" stroke="#808080" stroke-width="1.3"/></svg>
<div class="a" style="left:1204px;top:88px;width:138px;height:19px;background:#3c3f41;border:1px solid #2f3133;border-bottom:none"></div>
<svg class="a" style="left:1215px;top:90.0px" width="12" height="15" viewBox="0 0 12 15"><rect x="1.2" y="1.8" width="5.5" height="6" fill="#2c2e30"/><path d="M0.6 13.2V0.9H6.8L9.3 3.4" fill="none" stroke="#a8a8a8" stroke-width="1.2"/><rect x="4" y="4.3" width="5.2" height="3.4" rx="1" fill="#3f8ccb"/><rect x="2" y="6.5" width="4.5" height="5" rx="1" fill="#3f8ccb"/><rect x="7.8" y="6.5" width="3.4" height="4.5" rx="1" fill="#eec223"/><rect x="4.2" y="10" width="5.2" height="4" rx="1" fill="#eec223"/></svg>
<div class="t" style="left:1229px;top:91.5px;color:#bbbbbb;transform:scaleX(1.1478);transform-origin:0 0">home/.../startup.py</div>
<svg class="a" style="left:1229px;top:101.5px" width="95" height="3" viewBox="0 0 95 3"><path d="M0 2l1.5 -1.5l1.5 1.5l1.5 -1.5l1.5 1.5l1.5 -1.5l1.5 1.5l1.5 -1.5l1.5 1.5l1.5 -1.5l1.5 1.5l1.5 -1.5l1.5 1.5l1.5 -1.5l1.5 1.5l1.5 -1.5l1.5 1.5l1.5 -1.5l1.5 1.5l1.5 -1.5l1.5 1.5l1.5 -1.5l1.5 1.5l1.5 -1.5l1.5 1.5l1.5 -1.5l1.5 1.5l1.5 -1.5l1.5 1.5l1.5 -1.5l1.5 1.5l1.5 -1.5l1.5 1.5l1.5 -1.5l1.5 1.5l1.5 -1.5l1.5 1.5l1.5 -1.5l1.5 1.5l1.5 -1.5l1.5 1.5l1.5 -1.5l1.5 1.5l1.5 -1.5l1.5 1.5l1.5 -1.5l1.5 1.5l1.5 -1.5l1.5 1.5l1.5 -1.5l1.5 1.5l1.5 -1.5l1.5 1.5l1.5 -1.5l1.5 1.5l1.5 -1.5l1.5 1.5l1.5 -1.5l1.5 1.5l1.5 -1.5l1.5 1.5l1.5 -1.5l1.5 1.5l1.5 -1.5l1.5 1.5" fill="none" stroke="#d03030" stroke-width="0.8"/></svg>
<svg class="a" style="left:1329px;top:94.5px" width="7" height="7" viewBox="0 0 7 7"><path d="M1 1l5 5M6 1l-5 5" stroke="#808080" stroke-width="1.3"/></svg>
<div class="a" style="left:1342px;top:88px;width:137px;height:19px;background:#3c3f41;border:1px solid #2f3133;border-bottom:none"></div>
<svg class="a" style="left:1354px;top:90.0px" width="12" height="15" viewBox="0 0 12 15"><rect x="1.2" y="1.8" width="5.5" height="6" fill="#2c2e30"/><path d="M0.6 13.2V0.9H6.8L9.3 3.4" fill="none" stroke="#a8a8a8" stroke-width="1.2"/><rect x="4" y="4.3" width="5.2" height="3.4" rx="1" fill="#3f8ccb"/><rect x="2" y="6.5" width="4.5" height="5" rx="1" fill="#3f8ccb"/><rect x="7.8" y="6.5" width="3.4" height="4.5" rx="1" fill="#eec223"/><rect x="4.2" y="10" width="5.2" height="4" rx="1" fill="#eec223"/></svg>
<div class="t" style="left:1368px;top:91.5px;color:#bbbbbb;transform:scaleX(1.1254);transform-origin:0 0">serge/common.py</div>
<svg class="a" style="left:1462px;top:94.5px" width="7" height="7" viewBox="0 0 7 7"><path d="M1 1l5 5M6 1l-5 5" stroke="#808080" stroke-width="1.3"/></svg>
<div class="a" style="left:1479px;top:88px;width:117px;height:19px;background:linear-gradient(#5a5b5c,#474849);border:1px solid #2f3133;border-bottom:none"></div>
<svg class="a" style="left:1486px;top:90.0px" width="12" height="15" viewBox="0 0 12 15"><rect x="1.2" y="1.8" width="5.5" height="6" fill="#2c2e30"/><path d="M0.6 13.2V0.9H6.8L9.3 3.4" fill="none" stroke="#a8a8a8" stroke-width="1.2"/><rect x="4" y="4.3" width="5.2" height="3.4" rx="1" fill="#3f8ccb"/><rect x="2" y="6.5" width="4.5" height="5" rx="1" fill="#3f8ccb"/><rect x="7.8" y="6.5" width="3.4" height="4.5" rx="1" fill="#eec223"/><rect x="4.2" y="10" width="5.2" height="4" rx="1" fill="#eec223"/></svg>
<div class="t" style="left:1500px;top:91.5px;color:#bbbbbb;transform:scaleX(1.1415);transform-origin:0 0">game/theme.py</div>
<svg class="a" style="left:1582px;top:94.5px" width="7" height="7" viewBox="0 0 7 7"><path d="M1 1l5 5M6 1l-5 5" stroke="#808080" stroke-width="1.3"/></svg>
<div class="a" style="left:945px;top:107px;width:634px;height:3px;background:#515456"></div>
<div class="a" style="left:945px;top:110px;width:22px;height:731px;background:#313335"></div>
<div class="a" style="left:966px;top:110px;width:1px;height:731px;background:repeating-linear-gradient(#505050 0 1px,transparent 1px 3px)"></div>
<div class="a" style="left:967px;top:110px;width:612px;height:731px;background:#2b2b2b"></div>
<div class="a" style="left:1579px;top:107px;width:18px;height:734px;background:#3c3f41"></div>
<div class="a" style="left:1584px;top:112px;width:10px;height:10px;background:#c6c46a"></div>
<div class="a" style="left:1589px;top:396px;width:7px;height:68px;background:#575757;border-radius:3px"></div>
<div class="a" style="left:1584px;top:131px;width:8px;height:3px;background:#111111"></div>
<div class="a" style="left:1584px;top:414px;width:6px;height:3px;background:#111111"></div>
<div class="a" style="left:1584px;top:455px;width:6px;height:3px;background:#111111"></div>
<div class="a" style="left:1584px;top:496px;width:8px;height:3px;background:#111111"></div>
<div class="a" style="left:1584px;top:580px;width:8px;height:3px;background:#c6c020"></div>
<div class="a" style="left:1584px;top:585px;width:8px;height:3px;background:#c6c020"></div>
<div class="a" style="left:1584px;top:603px;width:8px;height:3px;background:#111111"></div>
<div class="a" style="left:1584px;top:206px;width:8px;height:11px;background:#b9b98a;border:1px solid #d8d8a8"></div>
<div class="a" style="left:1584px;top:218px;width:8px;height:4px;background:#c8c890"></div>
<div class="a" style="left:996.5px;top:106.2px;width:1px;height:167.14px;background:#333333"></div>
<div class="a" style="left:996.5px;top:311.91px;width:1px;height:552.85px;background:#333333"></div>
<div class="a" style="left:1020.5px;top:324.77px;width:1px;height:450.0px;background:#333333"></div>
<div class="a" style="left:967px;top:110px;width:612px;height:731px;overflow:hidden">
<div class="code" style="left:4px;top:-3.8px">        <span class="st">&#x27;rain-vx&#x27;</span>: (-<span class="n">5</span><span class="cm">,</span> +<span class="n">5</span>)<span class="cm">,</span>
        <span class="st">&#x27;rain-vy&#x27;</span>: (-<span class="n">2</span><span class="cm">,</span> +<span class="n">2</span>)<span class="cm">,</span>
        <span class="st">&#x27;rain-limit-x&#x27;</span>: (-<span class="n">40</span><span class="cm">,</span> <span class="n">840</span>)<span class="cm">,</span>
        <span class="st">&#x27;rain-limit-y&#x27;</span>: (-<span class="n">100</span><span class="cm">,</span> <span class="n">620</span>)<span class="cm">,</span>

        <span class="c"># Quiting</span>
        <span class="st">&#x27;pre-stop-pause&#x27;</span>: <span class="n">2</span><span class="cm">,</span>

        <span class="c"># Level over</span>
        <span class="st">&#x27;level-over-title&#x27;</span>: <span class="st">&#x27;Prepare to battle&#x27;</span><span class="cm">,</span>
        <span class="st">&#x27;start-level&#x27;</span>: <span class="n">1</span><span class="cm">,</span>
        <span class="st">&#x27;demo-level&#x27;</span>: <span class="n">7</span><span class="cm">,</span>

    })<span class="cm">,</span>


    <span class="st">&#x27;achievements&#x27;</span>: (<span class="st">&#x27;main&#x27;</span><span class="cm">,</span> {
        <span class="c"># Properties of the achievements system</span>
        <span class="st">&#x27;banner-duration&#x27;</span>: <span class="n">5</span><span class="cm">,</span>
        <span class="st">&#x27;banner-position&#x27;</span>: (<span class="n">175</span><span class="cm">,</span> <span class="n">525</span>)<span class="cm">,</span>
        <span class="st">&#x27;banner-size&#x27;</span>: (<span class="n">300</span><span class="cm">,</span> <span class="n">50</span>)<span class="cm">,</span>
        <span class="st">&#x27;banner-backcolour&#x27;</span>: (<span class="n">0</span><span class="cm">,</span> <span class="n">0</span><span class="cm">,</span> <span class="n">0</span><span class="cm">,</span> <span class="n">50</span>)<span class="cm">,</span>
        <span class="st">&#x27;banner-font-colour&#x27;</span>: (<span class="n">255</span><span class="cm">,</span> <span class="n">255</span><span class="cm">,</span> <span class="n">0</span><span class="cm">,</span> <span class="n">255</span>)<span class="cm">,</span>
        <span class="st">&#x27;banner-name-size&#x27;</span>: <span class="n">14</span><span class="cm">,</span>
        <span class="st">&#x27;banner-description-size&#x27;</span>: <span class="n">8</span><span class="cm">,</span>
        <span class="st">&#x27;banner-name-position&#x27;</span>: (-<span class="n">100</span><span class="cm">,</span> -<span class="n">18</span>)<span class="cm">,</span>
        <span class="st">&#x27;banner-description-position&#x27;</span>: (-<span class="n">100</span><span class="cm">,</span> <span class="n">0</span>)<span class="cm">,</span>
        <span class="st">&#x27;banner-font-name&#x27;</span>: <span class="st">&#x27;CLEAR&#x27;</span><span class="cm">,</span>
        <span class="st">&#x27;banner-graphic-position&#x27;</span>: (-<span class="n">125</span><span class="cm">,</span> <span class="n">0</span>)<span class="cm">,</span>

        <span class="st">&#x27;time-colour&#x27;</span>: (<span class="n">255</span><span class="cm">,</span> <span class="n">255</span><span class="cm">,</span> <span class="n">255</span><span class="cm">,</span> <span class="n">100</span>)<span class="cm">,</span>
        <span class="st">&#x27;time-size&#x27;</span>: <span class="n">10</span><span class="cm">,</span>
        <span class="st">&#x27;time-position&#x27;</span>: (-<span class="n">100</span><span class="cm">,</span> <span class="n">24</span>)<span class="cm">,</span>

        <span class="st">&#x27;logo-position&#x27;</span>: (<span class="n">400</span><span class="cm">,</span> <span class="n">50</span>)<span class="cm">,</span>
        <span class="st">&#x27;screen-background-sprite&#x27;</span>: <span class="st">&#x27;background&#x27;</span><span class="cm">,</span>
        <span class="st">&#x27;screen-background-position&#x27;</span>: (<span class="n">400</span><span class="cm">,</span> <span class="n">300</span>)<span class="cm">,</span>
        <span class="st">&#x27;grid-size&#x27;</span>: (<span class="n">2</span><span class="cm">,</span> <span class="n">5</span>)<span class="cm">,</span>
        <span class="st">&#x27;grid-width&#x27;</span>: <span class="n">800</span><span class="cm">,</span>
        <span class="st">&#x27;grid-height&#x27;</span>: <span class="n">400</span><span class="cm">,</span>
        <span class="st">&#x27;grid-position&#x27;</span>: (<span class="n">400</span><span class="cm">,</span> <span class="n">320</span>)<span class="cm">,</span>

        <span class="st">&#x27;back-colour&#x27;</span>: (<span class="n">255</span><span class="cm">,</span> <span class="n">255</span><span class="cm">,</span> <span class="n">255</span><span class="cm">,</span> <span class="n">255</span>)<span class="cm">,</span>
        <span class="st">&#x27;back-font-size&#x27;</span>: <span class="n">20</span><span class="cm">,</span>
        <span class="st">&#x27;back-font-name&#x27;</span>: <span class="st">&#x27;CLEAR&#x27;</span><span class="cm">,</span>
        <span class="st">&#x27;back-position&#x27;</span>: (<span class="n">400</span><span class="cm">,</span> <span class="n">560</span>)<span class="cm">,</span>
        <span class="st">&#x27;back-sound&#x27;</span>: None<span class="cm">,</span>
    })<span class="cm">,</span>

    <span class="st">&#x27;high-score-screen&#x27;</span>: (<span class="st">&#x27;achievements&#x27;</span><span class="cm">,</span> {
        <span class="c"># Title</span>
        <span class="st">&#x27;title-colour&#x27;</span>: (<span class="n">255</span><span class="cm">,</span> <span class="n">255</span><span class="cm">,</span> <span class="n">255</span>)<span class="cm">,</span>
        <span class="st">&#x27;title-size&#x27;</span>: <span class="n">32</span><span class="cm">,</span>
        <span class="st">&#x27;title-position&#x27;</span>: (<span class="n">400</span><span class="cm">,</span> <span class="n">160</span>)<span class="cm">,</span>
        <span class="c"># Back</span>
        <span class="st">&#x27;back-position&#x27;</span>: (<span class="n">720</span><span class="cm">,</span> <span class="n">580</span>)<span class="cm">,</span>
        <span class="c"># App</span>
        <span class="st">&#x27;app-url&#x27;</span>: <span class="st">&#x27;hxxp:/www.perpetualpyramid.com/qanat.html&#x27;</span><span class="cm">,</span></div>
</div>
<svg class="a" style="left:947px;top:313.91px" width="11" height="9" viewBox="0 0 11 9"><path d="M1 1.5l4 5.5l5-6.5" fill="none" stroke="#d0d0d0" stroke-width="1.6"/></svg>
<svg class="a" style="left:947px;top:738.19px" width="11" height="9" viewBox="0 0 11 9"><path d="M1 1.5l4 5.5l5-6.5" fill="none" stroke="#d0d0d0" stroke-width="1.6"/></svg>
<div class="a" style="left:3px;top:841px;width:1594px;height:20px;background:#3c3f41;border-top:1px solid #2f3133"></div>
<svg class="a" style="left:33px;top:845px" width="13" height="13" viewBox="0 0 13 13"><circle cx="7" cy="7" r="3.5" fill="#e8b070"/><rect x="4" y="10" width="6" height="3" fill="#3592c4"/><rect x="1" y="1" width="6" height="4" rx="2" fill="#dddddd"/></svg>
<div class="t" style="left:48px;top:845.0px;color:#bbbbbb;transform:scaleX(1.0190);transform-origin:0 0"><u>6</u>: TODO</div>
<svg class="a" style="left:109px;top:845px" width="14" height="13" viewBox="0 0 14 13"><rect x="0.5" y="0.5" width="8" height="8" fill="#3592c4"/><circle cx="8" cy="8.5" r="4" fill="#e8a33a"/><circle cx="6" cy="6.5" r="3" fill="#3aae3a"/></svg>
<div class="t" style="left:124px;top:845.0px;color:#bbbbbb;transform:scaleX(1.0841);transform-origin:0 0"><u>9</u>: Changes</div>
<svg class="a" style="left:198px;top:846px" width="11" height="10" viewBox="0 0 11 10"><path d="M0.5 0.5h10v7h-6l-2.5 2v-2h-1.5z" fill="#555"/></svg>
<div class="t" style="left:213px;top:845.0px;color:#bbbbbb;transform:scaleX(1.0815);transform-origin:0 0">Event Log</div>
<svg class="a" style="left:281px;top:846px" width="11" height="11" viewBox="0 0 11 11"><rect x="0.5" y="0.5" width="6" height="6" fill="#3592c4"/><rect x="3.5" y="3.5" width="7" height="7" fill="#dbe7f3" stroke="#3592c4" stroke-width="0.8"/></svg>
<div class="t" style="left:295px;top:845.0px;color:#bbbbbb;transform:scaleX(1.0931);transform-origin:0 0">Database</div>
<div class="a" style="left:3px;top:861px;width:1594px;height:18px;background:#3c3f41;border-top:1px solid #45484a"></div>
<div class="a" style="left:8px;top:864px;width:12px;height:12px;background:#2e3032;border:1px solid #777"></div>
<svg class="a" style="left:1113px;top:864px" width="13" height="13" viewBox="0 0 13 13"><g stroke="#6a6a6a" stroke-width="1.3"><path d="M6.5 0.5v3M6.5 9.5v3M0.5 6.5h3M9.5 6.5h3M2.3 2.3l2 2M8.7 8.7l2 2M10.7 2.3l-2 2M4.3 8.7l-2 2"/></g></svg>
<div class="t" style="left:1161px;top:864.0px;color:#bbbbbb;transform:scaleX(1.1386);transform-origin:0 0">108:37</div>
<div class="t" style="left:1229px;top:864.0px;color:#bbbbbb;transform:scaleX(0.9069);transform-origin:0 0">LF</div>
<svg class="a" style="left:1256px;top:865px" width="7" height="10" viewBox="0 0 7 10"><path d="M3.5 0.5l3 3.5h-6zM3.5 9.5l3-3.5h-6z" fill="#aaaaaa"/></svg>
<svg class="a" style="left:1343px;top:865px" width="7" height="10" viewBox="0 0 7 10"><path d="M3.5 0.5l3 3.5h-6zM3.5 9.5l3-3.5h-6z" fill="#aaaaaa"/></svg>
<svg class="a" style="left:1539px;top:865px" width="7" height="10" viewBox="0 0 7 10"><path d="M3.5 0.5l3 3.5h-6zM3.5 9.5l3-3.5h-6z" fill="#aaaaaa"/></svg>
<div class="t" style="left:1269px;top:864.0px;color:#bbbbbb;transform:scaleX(0.9814);transform-origin:0 0">UTF-8</div>
<div class="t" style="left:1355px;top:864.0px;color:#bbbbbb;transform:scaleX(1.1285);transform-origin:0 0">Insert</div>
<div class="t" style="left:1420px;top:864.0px;color:#bbbbbb;transform:scaleX(1.1302);transform-origin:0 0">Git: master</div>
<svg class="a" style="left:1553px;top:864px" width="10" height="12" viewBox="0 0 10 12"><path d="M1.5 5v-3q0-1.5 1.5-1.5t1.5 1.5" fill="none" stroke="#aaa"/><rect x="3" y="5" width="7" height="6" fill="#aaa"/><path d="M5 7h3M6.5 7v3" stroke="#3c3f41"/></svg>
<svg class="a" style="left:1571px;top:863px" width="12" height="14" viewBox="0 0 12 14"><circle cx="6" cy="6" r="5" fill="none" stroke="#aaa" stroke-width="1.2"/><path d="M3.5 6h5M4 9h4M6 1v4" stroke="#aaa"/><path d="M2 12h8" stroke="#aaa" stroke-width="1.4"/></svg></body></html>
